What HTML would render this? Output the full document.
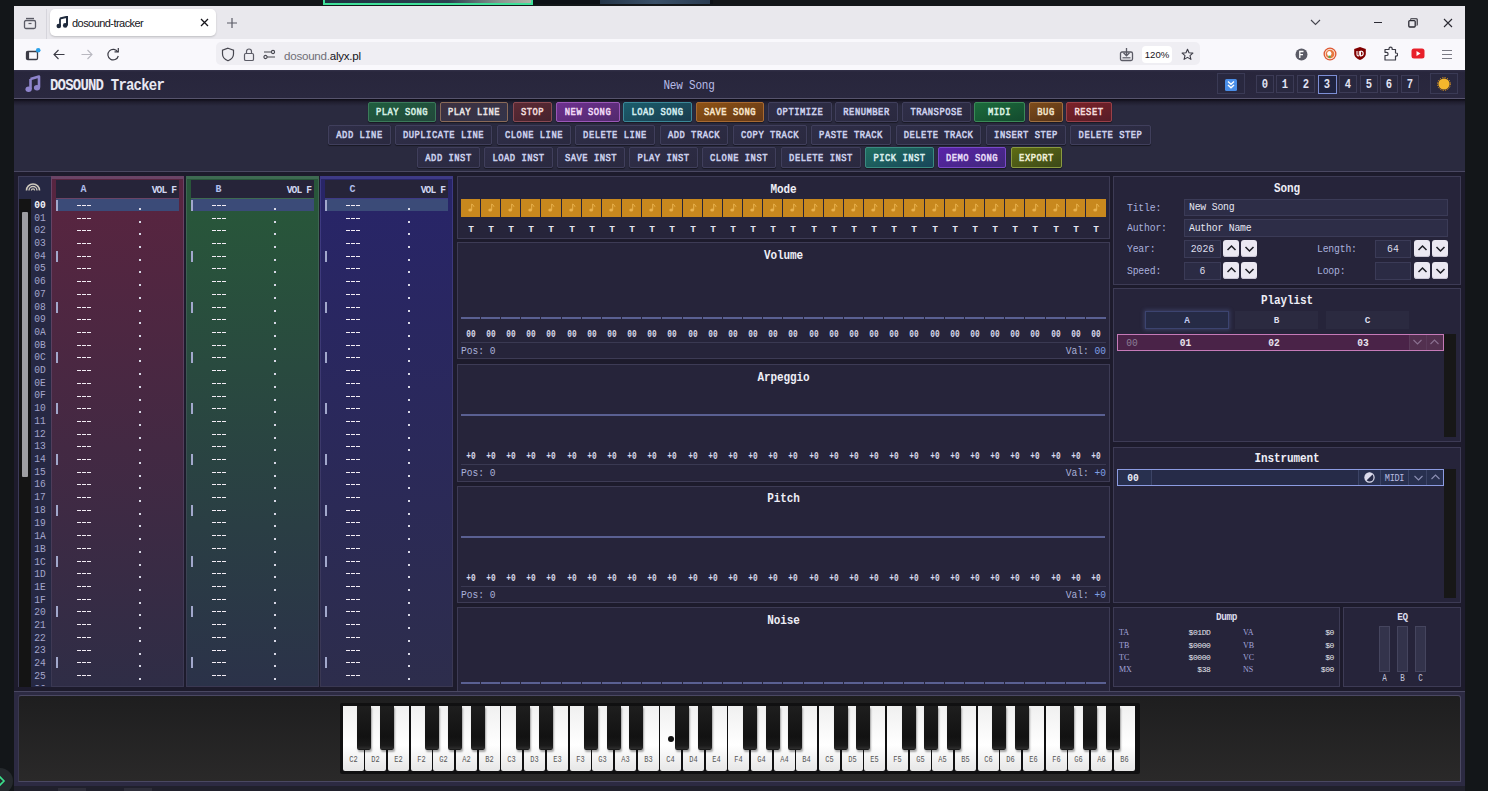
<!DOCTYPE html>
<html><head><meta charset="utf-8"><title>dosound-tracker</title>
<style>*{box-sizing:border-box;margin:0;padding:0}
html,body{width:1488px;height:791px;overflow:hidden;background:#131619;font-family:"Liberation Mono",monospace;position:relative}
.ab{position:absolute}
.cc{display:flex;align-items:center;justify-content:center;white-space:pre}
.lc{display:flex;align-items:center;white-space:pre}
.rc{display:flex;align-items:center;justify-content:flex-end;white-space:pre}
.sans{font-family:"Liberation Sans",sans-serif}
</style></head><body>
<div class="ab" style="left:323px;top:0px;width:210px;height:5px;background:linear-gradient(90deg,#1d3140,#2b4150 60%,#8a9690 85%,#b0b4a8);border:2px solid #3fe09a;border-top:none"></div><div class="ab" style="left:533px;top:0px;width:180px;height:4px;background:#0d1116"></div><div class="ab" style="left:600px;top:0px;width:110px;height:4px;background:linear-gradient(90deg,#243548,#3a5068,#2a3c52)"></div><div class="ab" style="left:14px;top:6px;width:1451px;height:33px;background:#e9e8ed"></div><div class="ab" style="left:14px;top:39px;width:1451px;height:31px;background:#f9f8fc"></div><svg class="ab" style="left:22px;top:15px;" width="16" height="16" viewBox="0 0 16 16"><rect x="2.5" y="5.5" width="11" height="8" rx="1.5" fill="none" stroke="#5b5b66" stroke-width="1.3"/><path d="M4 3.5h8" stroke="#5b5b66" stroke-width="1.3"/><path d="M6.5 8.5h3" stroke="#5b5b66" stroke-width="1.2"/></svg><div class="ab" style="left:46px;top:9px;width:1px;height:30px;background:#d6d5dc"></div><div class="ab" style="left:50px;top:9px;width:166px;height:27px;background:#fff;border-radius:5px;box-shadow:0 1px 2px rgba(0,0,0,.18)"></div><svg class="ab" style="left:56px;top:16px;" width="12" height="13" viewBox="0 0 12 13"><path d="M4 2.5 L11 0.8 V9.5" fill="none" stroke="#1f2a3c" stroke-width="2"/><circle cx="2.8" cy="10" r="2.3" fill="#1f2a3c"/><circle cx="9.2" cy="9.4" r="2.3" fill="#1f2a3c"/><path d="M4 2.5 V10" stroke="#1f2a3c" stroke-width="1.8"/></svg><div class="ab lc" style="left:72px;top:12.50px;height:20px;font-family:'Liberation Sans',sans-serif;font-size:11px;letter-spacing:-0.55px;color:#15141a">dosound-tracker</div><svg class="ab" style="left:200px;top:18px;" width="9" height="9" viewBox="0 0 9 9"><path d="M1 1 L8 8 M8 1 L1 8" stroke="#15141a" stroke-width="1.3"/></svg><svg class="ab" style="left:226px;top:17px;" width="12" height="12" viewBox="0 0 12 12"><path d="M6 1 V11 M1 6 H11" stroke="#5b5b66" stroke-width="1.2"/></svg><svg class="ab" style="left:1310px;top:19px;" width="11" height="7" viewBox="0 0 11 7"><path d="M1 1 L5.5 5.5 L10 1" fill="none" stroke="#45454e" stroke-width="1.1"/></svg><div class="ab" style="left:1374px;top:22px;width:8px;height:1.3px;background:#2b2a33"></div><svg class="ab" style="left:1408px;top:18px;" width="10" height="10" viewBox="0 0 10 10"><rect x="0.8" y="2.6" width="6.4" height="6.4" rx="1" fill="none" stroke="#2b2a33" stroke-width="1.3"/><path d="M2.6 1.8 V1.4 Q2.6 0.8 3.4 0.8 H8.4 Q9.2 0.8 9.2 1.6 V6.6 Q9.2 7.4 8.6 7.4" fill="none" stroke="#2b2a33" stroke-width="1.1"/></svg><svg class="ab" style="left:1443px;top:18px;" width="10" height="10" viewBox="0 0 10 10"><path d="M1 1 L9 9 M9 1 L1 9" stroke="#2b2a33" stroke-width="1.1"/></svg><svg class="ab" style="left:24px;top:46px;" width="18" height="16" viewBox="0 0 18 16"><rect x="2.5" y="5.5" width="11" height="8" rx="1.3" fill="none" stroke="#3b3b45" stroke-width="1.3"/><rect x="2.5" y="5.5" width="2.6" height="8" fill="#3b3b45"/><circle cx="14.2" cy="4.2" r="2.3" fill="#2aa1e8"/></svg><svg class="ab" style="left:52px;top:48px;" width="14" height="14" viewBox="0 0 14 14"><path d="M12.5 6.5 H2 M6.5 2 L2 6.5 L6.5 11" fill="none" stroke="#3b3b45" stroke-width="1.1"/></svg><svg class="ab" style="left:80px;top:48px;" width="14" height="14" viewBox="0 0 14 14"><path d="M1.5 6.5 H12 M7.5 2 L12 6.5 L7.5 11" fill="none" stroke="#b9b8c0" stroke-width="1.1"/></svg><svg class="ab" style="left:106px;top:47px;" width="14" height="15" viewBox="0 0 14 15"><path d="M11.8 5 A5.3 5.3 0 1 0 12.3 9" fill="none" stroke="#3b3b45" stroke-width="1.2"/><path d="M8.5 4.8 H12.3 V1" fill="none" stroke="#3b3b45" stroke-width="1.2"/></svg><div class="ab" style="left:216px;top:42px;width:984px;height:23px;background:#efeef3;border-radius:5px"></div><svg class="ab" style="left:221px;top:47px;" width="14" height="15" viewBox="0 0 14 15"><path d="M7 1.2 L12.5 3.2 V7 C12.5 10.5 9.5 12.8 7 13.8 C4.5 12.8 1.5 10.5 1.5 7 V3.2 Z" fill="none" stroke="#46464f" stroke-width="1.2"/></svg><svg class="ab" style="left:243px;top:47px;" width="12" height="15" viewBox="0 0 12 15"><rect x="1.5" y="6.5" width="9" height="7" rx="1.3" fill="none" stroke="#5b5b66" stroke-width="1.2"/><path d="M3.5 6.5 V4.5 A2.5 2.5 0 0 1 8.5 4.5 V6.5" fill="none" stroke="#5b5b66" stroke-width="1.2"/></svg><svg class="ab" style="left:263px;top:49px;" width="13" height="11" viewBox="0 0 13 11"><path d="M1 3 H8 M4 8 H12" stroke="#46464f" stroke-width="1.2"/><circle cx="10" cy="3" r="1.6" fill="none" stroke="#46464f" stroke-width="1.1"/><circle cx="2.5" cy="8" r="1.6" fill="none" stroke="#46464f" stroke-width="1.1"/></svg><div class="ab lc" style="left:284px;top:45.00px;height:20px;font-family:'Liberation Sans',sans-serif;font-size:11.6px;letter-spacing:-0.25px"><span style="color:#6f6f78">dosound.</span><span style="color:#15141a">alyx.pl</span></div><svg class="ab" style="left:1119px;top:47px;" width="15" height="15" viewBox="0 0 15 15"><rect x="1.5" y="5" width="12" height="8.5" rx="1.5" fill="none" stroke="#5b5b66" stroke-width="1.3"/><path d="M7.5 1 V8.5 M4.5 5.8 L7.5 8.8 L10.5 5.8" fill="none" stroke="#5b5b66" stroke-width="1.3"/><path d="M3.5 10.8 H11.5" stroke="#5b5b66" stroke-width="1.2"/></svg><div class="ab" style="left:1142px;top:46px;width:30px;height:17px;background:#fff;border-radius:4px"></div><div class="ab cc" style="left:1137.00px;top:47.50px;width:40px;height:14px;font-family:'Liberation Sans',sans-serif;font-size:9.6px;color:#15141a">120%</div><svg class="ab" style="left:1181px;top:48px;" width="13" height="13" viewBox="0 0 13 13"><path d="M6.5 1.2 L8 4.8 L11.9 5.1 L9 7.6 L9.9 11.4 L6.5 9.4 L3.1 11.4 L4 7.6 L1.1 5.1 L5 4.8 Z" fill="none" stroke="#3b3b45" stroke-width="1.1" stroke-linejoin="round"/></svg><svg class="ab" style="left:1295px;top:48px;" width="13" height="13" viewBox="0 0 13 13"><circle cx="6.5" cy="6.5" r="6" fill="#5b5b66"/><path d="M4.8 10 V3.5 H8.5 M4.8 6.6 H8" stroke="#fff" stroke-width="1.3" fill="none"/></svg><svg class="ab" style="left:1323px;top:47px;" width="14" height="14" viewBox="0 0 14 14"><circle cx="7" cy="7" r="6.5" fill="#de5833"/><circle cx="7" cy="7" r="5.2" fill="#fbe7dc"/><circle cx="7" cy="7" r="4.3" fill="#e8793f"/><ellipse cx="6.3" cy="6.6" rx="2.2" ry="2.6" fill="#fff"/><rect x="5.6" y="8.6" width="2" height="2.4" fill="#4caf50"/></svg><svg class="ab" style="left:1353px;top:46px;" width="14" height="15" viewBox="0 0 14 15"><path d="M7 1 L12.8 3 V7.5 C12.8 10.8 10 13 7 14 C4 13 1.2 10.8 1.2 7.5 V3 Z" fill="#800000"/><path d="M4 5 V8.5 Q4 10 5.3 10 Q6.3 10 6.3 8.5 V5" fill="none" stroke="#fff" stroke-width="1.1"/><path d="M7.5 5 V10 Q10.2 10 10.2 7.5 Q10.2 5 7.5 5" fill="none" stroke="#fff" stroke-width="1.1"/></svg><svg class="ab" style="left:1383px;top:46px;" width="15" height="16" viewBox="0 0 15 16"><path d="M2 14 V9.5 H3.5 A1.6 1.6 0 1 0 3.5 6.3 H2 V3.5 H6 V2.8 A1.6 1.6 0 1 1 9.2 2.8 V3.5 H12.5 V7 H13 A1.6 1.6 0 1 1 13 10.2 H12.5 V14 Z" fill="none" stroke="#3b3b45" stroke-width="1.2" stroke-linejoin="round"/></svg><svg class="ab" style="left:1411px;top:48px;" width="14" height="11" viewBox="0 0 14 11"><rect x="0.5" y="0.5" width="13" height="10" rx="2.5" fill="#e8202a"/><path d="M5.5 3 L9.5 5.5 L5.5 8 Z" fill="#fff"/></svg><svg class="ab" style="left:1441px;top:48px;" width="12" height="12" viewBox="0 0 12 12"><path d="M1 2.5 H11 M1 6.5 H11 M1 10.5 H11" stroke="#7a7a84" stroke-width="1.2"/></svg><div class="ab" style="left:14px;top:70px;width:1451px;height:721px;background:#2a2a3f"></div><div class="ab" style="left:14px;top:70px;width:1451px;height:29px;background:linear-gradient(180deg,#34324a 0px,#28263c 2px,#2a283f);border-bottom:1px solid #57546d"></div><div class="ab" style="left:14px;top:99px;width:1451px;height:7px;background:linear-gradient(180deg,#0c0b15,#1f1d2e 40%,#2a2a3f)"></div><svg class="ab" style="left:25px;top:75px;" width="16" height="18" viewBox="0 0 16 18"><path d="M5.5 4 L14 1.5 V12.5" fill="none" stroke="#8e84cc" stroke-width="2.6" stroke-linejoin="round"/><path d="M5.5 4 V14" stroke="#8e84cc" stroke-width="2.6"/><ellipse cx="3.6" cy="14.2" rx="3.1" ry="2.7" fill="#8e84cc"/><ellipse cx="12" cy="12.8" rx="3.1" ry="2.7" fill="#8e84cc"/></svg><div class="ab lc" style="left:50px;top:75.00px;height:20px;font-size:14px;letter-spacing:-0.8px;font-weight:bold;color:#e8e8f2"><span style="display:inline-block;transform:scaleY(1.2)">DOSOUND Tracker</span></div><div class="ab cc" style="left:629.00px;top:74.50px;width:120px;height:20px;font-size:11px;letter-spacing:-0.2px;color:#b8bce8"><span style="display:inline-block;transform:scaleY(1.2)">New Song</span></div><div class="ab" style="left:1217px;top:73px;width:28px;height:21px;border:1px solid #3a3a55;background:#29283f"></div><svg class="ab" style="left:1225px;top:79px;" width="12" height="12" viewBox="0 0 12 12"><rect x="0" y="0" width="12" height="12" rx="1.5" fill="#4a8ee8"/><path d="M3 2.5 L6 5.2 L9 2.5 M3 6 L6 8.8 L9 6" fill="none" stroke="#fff" stroke-width="1.4"/></svg><div class="ab" style="left:1256px;top:75px;width:18px;height:18px;border:1px solid #3c3b56;background:#29283f"></div><div class="ab cc" style="left:1256.00px;top:75.60px;width:18px;height:16px;font-size:10.5px;font-weight:bold;color:#e2e4f4"><span style="display:inline-block;transform:scaleY(1.2)">0</span></div><div class="ab" style="left:1276px;top:75px;width:18px;height:18px;border:1px solid #3c3b56;background:#29283f"></div><div class="ab cc" style="left:1276.00px;top:75.60px;width:18px;height:16px;font-size:10.5px;font-weight:bold;color:#e2e4f4"><span style="display:inline-block;transform:scaleY(1.2)">1</span></div><div class="ab" style="left:1297px;top:75px;width:18px;height:18px;border:1px solid #3c3b56;background:#29283f"></div><div class="ab cc" style="left:1297.00px;top:75.60px;width:18px;height:16px;font-size:10.5px;font-weight:bold;color:#e2e4f4"><span style="display:inline-block;transform:scaleY(1.2)">2</span></div><div class="ab" style="left:1318px;top:75px;width:19px;height:19px;border:1px solid #7d8fd6;background:#1f2340"></div><div class="ab cc" style="left:1318.00px;top:75.60px;width:18px;height:16px;font-size:10.5px;font-weight:bold;color:#e2e4f4"><span style="display:inline-block;transform:scaleY(1.2)">3</span></div><div class="ab" style="left:1339px;top:75px;width:18px;height:18px;border:1px solid #3c3b56;background:#29283f"></div><div class="ab cc" style="left:1339.00px;top:75.60px;width:18px;height:16px;font-size:10.5px;font-weight:bold;color:#e2e4f4"><span style="display:inline-block;transform:scaleY(1.2)">4</span></div><div class="ab" style="left:1360px;top:75px;width:18px;height:18px;border:1px solid #3c3b56;background:#29283f"></div><div class="ab cc" style="left:1360.00px;top:75.60px;width:18px;height:16px;font-size:10.5px;font-weight:bold;color:#e2e4f4"><span style="display:inline-block;transform:scaleY(1.2)">5</span></div><div class="ab" style="left:1380px;top:75px;width:18px;height:18px;border:1px solid #3c3b56;background:#29283f"></div><div class="ab cc" style="left:1380.00px;top:75.60px;width:18px;height:16px;font-size:10.5px;font-weight:bold;color:#e2e4f4"><span style="display:inline-block;transform:scaleY(1.2)">6</span></div><div class="ab" style="left:1401px;top:75px;width:18px;height:18px;border:1px solid #3c3b56;background:#29283f"></div><div class="ab cc" style="left:1401.00px;top:75.60px;width:18px;height:16px;font-size:10.5px;font-weight:bold;color:#e2e4f4"><span style="display:inline-block;transform:scaleY(1.2)">7</span></div><div class="ab" style="left:1430px;top:73px;width:28px;height:21px;border:1px solid #3a3a55;background:#29283f"></div><svg class="ab" style="left:1437px;top:77px;" width="14" height="14" viewBox="0 0 14 14"><circle cx="7" cy="7" r="5.6" fill="#f3b62c"/><circle cx="7" cy="7" r="6.4" fill="none" stroke="#e89a20" stroke-width="1" stroke-dasharray="1.2 1.3"/></svg><div class="ab" style="left:368px;top:102px;width:68px;height:20px;background:linear-gradient(160deg,#1f5e3e,#22473a);border:1px solid #3b7a5a;border-radius:2px;box-shadow:0 1px 1px rgba(0,0,0,.45)"></div><div class="ab cc" style="left:363.00px;top:102.00px;width:78px;height:20px;font-size:8.8px;letter-spacing:0.52px;font-weight:normal;-webkit-text-stroke:0.45px #d8f0e4;color:#d8f0e4"><span style="display:inline-block;transform:scaleY(1.3)">PLAY SONG</span></div><div class="ab" style="left:440px;top:102px;width:68px;height:20px;background:linear-gradient(160deg,#3d3040,#33344a);border:1px solid #8a6a58;border-radius:2px;box-shadow:0 1px 1px rgba(0,0,0,.45)"></div><div class="ab cc" style="left:435.00px;top:102.00px;width:78px;height:20px;font-size:8.8px;letter-spacing:0.52px;font-weight:normal;-webkit-text-stroke:0.45px #eae4e4;color:#eae4e4"><span style="display:inline-block;transform:scaleY(1.3)">PLAY LINE</span></div><div class="ab" style="left:513px;top:102px;width:39px;height:20px;background:linear-gradient(160deg,#5c2a34,#45222e);border:1px solid #8a4a52;border-radius:2px;box-shadow:0 1px 1px rgba(0,0,0,.45)"></div><div class="ab cc" style="left:508.00px;top:102.00px;width:49px;height:20px;font-size:8.8px;letter-spacing:0.52px;font-weight:normal;-webkit-text-stroke:0.45px #f2dede;color:#f2dede"><span style="display:inline-block;transform:scaleY(1.3)">STOP</span></div><div class="ab" style="left:556px;top:102px;width:64px;height:20px;background:linear-gradient(160deg,#6d318f,#52296c);border:1px solid #9a58b8;border-radius:2px;box-shadow:0 1px 1px rgba(0,0,0,.45)"></div><div class="ab cc" style="left:551.00px;top:102.00px;width:74px;height:20px;font-size:8.8px;letter-spacing:0.52px;font-weight:normal;-webkit-text-stroke:0.45px #f2dcf8;color:#f2dcf8"><span style="display:inline-block;transform:scaleY(1.3)">NEW SONG</span></div><div class="ab" style="left:623px;top:102px;width:69px;height:20px;background:linear-gradient(160deg,#1b5d6c,#1a3c4e);border:1px solid #3b8898;border-radius:2px;box-shadow:0 1px 1px rgba(0,0,0,.45)"></div><div class="ab cc" style="left:618.00px;top:102.00px;width:79px;height:20px;font-size:8.8px;letter-spacing:0.52px;font-weight:normal;-webkit-text-stroke:0.45px #d6eef2;color:#d6eef2"><span style="display:inline-block;transform:scaleY(1.3)">LOAD SONG</span></div><div class="ab" style="left:696px;top:102px;width:68px;height:20px;background:linear-gradient(160deg,#8e5214,#633818);border:1px solid #a86a32;border-radius:2px;box-shadow:0 1px 1px rgba(0,0,0,.45)"></div><div class="ab cc" style="left:691.00px;top:102.00px;width:78px;height:20px;font-size:8.8px;letter-spacing:0.52px;font-weight:normal;-webkit-text-stroke:0.45px #f8e6cc;color:#f8e6cc"><span style="display:inline-block;transform:scaleY(1.3)">SAVE SONG</span></div><div class="ab" style="left:768px;top:102px;width:64px;height:20px;background:linear-gradient(160deg,#2f2e48,#2a293f);border:1px solid #403f5c;border-radius:2px;box-shadow:0 1px 1px rgba(0,0,0,.45)"></div><div class="ab cc" style="left:763.00px;top:102.00px;width:74px;height:20px;font-size:8.8px;letter-spacing:0.52px;font-weight:normal;-webkit-text-stroke:0.45px #cdd2ee;color:#cdd2ee"><span style="display:inline-block;transform:scaleY(1.3)">OPTIMIZE</span></div><div class="ab" style="left:835px;top:102px;width:63px;height:20px;background:linear-gradient(160deg,#2f2e48,#2a293f);border:1px solid #403f5c;border-radius:2px;box-shadow:0 1px 1px rgba(0,0,0,.45)"></div><div class="ab cc" style="left:830.00px;top:102.00px;width:73px;height:20px;font-size:8.8px;letter-spacing:0.52px;font-weight:normal;-webkit-text-stroke:0.45px #cdd2ee;color:#cdd2ee"><span style="display:inline-block;transform:scaleY(1.3)">RENUMBER</span></div><div class="ab" style="left:902px;top:102px;width:69px;height:20px;background:linear-gradient(160deg,#2f2e48,#2a293f);border:1px solid #403f5c;border-radius:2px;box-shadow:0 1px 1px rgba(0,0,0,.45)"></div><div class="ab cc" style="left:897.00px;top:102.00px;width:79px;height:20px;font-size:8.8px;letter-spacing:0.52px;font-weight:normal;-webkit-text-stroke:0.45px #cdd2ee;color:#cdd2ee"><span style="display:inline-block;transform:scaleY(1.3)">TRANSPOSE</span></div><div class="ab" style="left:974px;top:102px;width:51px;height:20px;background:linear-gradient(160deg,#1c6c3c,#134a2e);border:1px solid #3b8a58;border-radius:2px;box-shadow:0 1px 1px rgba(0,0,0,.45)"></div><div class="ab cc" style="left:969.00px;top:102.00px;width:61px;height:20px;font-size:8.8px;letter-spacing:0.52px;font-weight:normal;-webkit-text-stroke:0.45px #dcf4e4;color:#dcf4e4"><span style="display:inline-block;transform:scaleY(1.3)">MIDI</span></div><div class="ab" style="left:1029px;top:102px;width:34px;height:20px;background:linear-gradient(160deg,#7e4c1a,#553218);border:1px solid #a07040;border-radius:2px;box-shadow:0 1px 1px rgba(0,0,0,.45)"></div><div class="ab cc" style="left:1024.00px;top:102.00px;width:44px;height:20px;font-size:8.8px;letter-spacing:0.52px;font-weight:normal;-webkit-text-stroke:0.45px #f4e4cc;color:#f4e4cc"><span style="display:inline-block;transform:scaleY(1.3)">BUG</span></div><div class="ab" style="left:1066px;top:102px;width:46px;height:20px;background:linear-gradient(160deg,#7c2228,#561c28);border:1px solid #9a4048;border-radius:2px;box-shadow:0 1px 1px rgba(0,0,0,.45)"></div><div class="ab cc" style="left:1061.00px;top:102.00px;width:56px;height:20px;font-size:8.8px;letter-spacing:0.52px;font-weight:normal;-webkit-text-stroke:0.45px #f6dede;color:#f6dede"><span style="display:inline-block;transform:scaleY(1.3)">RESET</span></div><div class="ab" style="left:328px;top:125px;width:63px;height:20px;background:linear-gradient(160deg,#2f2e48,#2a293f);border:1px solid #403f5c;border-radius:2px;box-shadow:0 1px 1px rgba(0,0,0,.45)"></div><div class="ab cc" style="left:323.00px;top:125.00px;width:73px;height:20px;font-size:8.8px;letter-spacing:0.52px;font-weight:normal;-webkit-text-stroke:0.45px #cdd2ee;color:#cdd2ee"><span style="display:inline-block;transform:scaleY(1.3)">ADD LINE</span></div><div class="ab" style="left:395px;top:125px;width:97px;height:20px;background:linear-gradient(160deg,#2f2e48,#2a293f);border:1px solid #403f5c;border-radius:2px;box-shadow:0 1px 1px rgba(0,0,0,.45)"></div><div class="ab cc" style="left:390.00px;top:125.00px;width:107px;height:20px;font-size:8.8px;letter-spacing:0.52px;font-weight:normal;-webkit-text-stroke:0.45px #cdd2ee;color:#cdd2ee"><span style="display:inline-block;transform:scaleY(1.3)">DUPLICATE LINE</span></div><div class="ab" style="left:497px;top:125px;width:74px;height:20px;background:linear-gradient(160deg,#2f2e48,#2a293f);border:1px solid #403f5c;border-radius:2px;box-shadow:0 1px 1px rgba(0,0,0,.45)"></div><div class="ab cc" style="left:492.00px;top:125.00px;width:84px;height:20px;font-size:8.8px;letter-spacing:0.52px;font-weight:normal;-webkit-text-stroke:0.45px #cdd2ee;color:#cdd2ee"><span style="display:inline-block;transform:scaleY(1.3)">CLONE LINE</span></div><div class="ab" style="left:575px;top:125px;width:80px;height:20px;background:linear-gradient(160deg,#2f2e48,#2a293f);border:1px solid #403f5c;border-radius:2px;box-shadow:0 1px 1px rgba(0,0,0,.45)"></div><div class="ab cc" style="left:570.00px;top:125.00px;width:90px;height:20px;font-size:8.8px;letter-spacing:0.52px;font-weight:normal;-webkit-text-stroke:0.45px #cdd2ee;color:#cdd2ee"><span style="display:inline-block;transform:scaleY(1.3)">DELETE LINE</span></div><div class="ab" style="left:660px;top:125px;width:68px;height:20px;background:linear-gradient(160deg,#2f2e48,#2a293f);border:1px solid #403f5c;border-radius:2px;box-shadow:0 1px 1px rgba(0,0,0,.45)"></div><div class="ab cc" style="left:655.00px;top:125.00px;width:78px;height:20px;font-size:8.8px;letter-spacing:0.52px;font-weight:normal;-webkit-text-stroke:0.45px #cdd2ee;color:#cdd2ee"><span style="display:inline-block;transform:scaleY(1.3)">ADD TRACK</span></div><div class="ab" style="left:733px;top:125px;width:74px;height:20px;background:linear-gradient(160deg,#2f2e48,#2a293f);border:1px solid #403f5c;border-radius:2px;box-shadow:0 1px 1px rgba(0,0,0,.45)"></div><div class="ab cc" style="left:728.00px;top:125.00px;width:84px;height:20px;font-size:8.8px;letter-spacing:0.52px;font-weight:normal;-webkit-text-stroke:0.45px #cdd2ee;color:#cdd2ee"><span style="display:inline-block;transform:scaleY(1.3)">COPY TRACK</span></div><div class="ab" style="left:811px;top:125px;width:80px;height:20px;background:linear-gradient(160deg,#2f2e48,#2a293f);border:1px solid #403f5c;border-radius:2px;box-shadow:0 1px 1px rgba(0,0,0,.45)"></div><div class="ab cc" style="left:806.00px;top:125.00px;width:90px;height:20px;font-size:8.8px;letter-spacing:0.52px;font-weight:normal;-webkit-text-stroke:0.45px #cdd2ee;color:#cdd2ee"><span style="display:inline-block;transform:scaleY(1.3)">PASTE TRACK</span></div><div class="ab" style="left:896px;top:125px;width:85px;height:20px;background:linear-gradient(160deg,#2f2e48,#2a293f);border:1px solid #403f5c;border-radius:2px;box-shadow:0 1px 1px rgba(0,0,0,.45)"></div><div class="ab cc" style="left:891.00px;top:125.00px;width:95px;height:20px;font-size:8.8px;letter-spacing:0.52px;font-weight:normal;-webkit-text-stroke:0.45px #cdd2ee;color:#cdd2ee"><span style="display:inline-block;transform:scaleY(1.3)">DELETE TRACK</span></div><div class="ab" style="left:986px;top:125px;width:80px;height:20px;background:linear-gradient(160deg,#2f2e48,#2a293f);border:1px solid #403f5c;border-radius:2px;box-shadow:0 1px 1px rgba(0,0,0,.45)"></div><div class="ab cc" style="left:981.00px;top:125.00px;width:90px;height:20px;font-size:8.8px;letter-spacing:0.52px;font-weight:normal;-webkit-text-stroke:0.45px #cdd2ee;color:#cdd2ee"><span style="display:inline-block;transform:scaleY(1.3)">INSERT STEP</span></div><div class="ab" style="left:1070px;top:125px;width:81px;height:20px;background:linear-gradient(160deg,#2f2e48,#2a293f);border:1px solid #403f5c;border-radius:2px;box-shadow:0 1px 1px rgba(0,0,0,.45)"></div><div class="ab cc" style="left:1065.00px;top:125.00px;width:91px;height:20px;font-size:8.8px;letter-spacing:0.52px;font-weight:normal;-webkit-text-stroke:0.45px #cdd2ee;color:#cdd2ee"><span style="display:inline-block;transform:scaleY(1.3)">DELETE STEP</span></div><div class="ab" style="left:417px;top:147px;width:63px;height:21px;background:linear-gradient(160deg,#2f2e48,#2a293f);border:1px solid #403f5c;border-radius:2px;box-shadow:0 1px 1px rgba(0,0,0,.45)"></div><div class="ab cc" style="left:412.00px;top:147.00px;width:73px;height:21px;font-size:8.8px;letter-spacing:0.52px;font-weight:normal;-webkit-text-stroke:0.45px #cdd2ee;color:#cdd2ee"><span style="display:inline-block;transform:scaleY(1.3)">ADD INST</span></div><div class="ab" style="left:484px;top:147px;width:69px;height:21px;background:linear-gradient(160deg,#2f2e48,#2a293f);border:1px solid #403f5c;border-radius:2px;box-shadow:0 1px 1px rgba(0,0,0,.45)"></div><div class="ab cc" style="left:479.00px;top:147.00px;width:79px;height:21px;font-size:8.8px;letter-spacing:0.52px;font-weight:normal;-webkit-text-stroke:0.45px #cdd2ee;color:#cdd2ee"><span style="display:inline-block;transform:scaleY(1.3)">LOAD INST</span></div><div class="ab" style="left:557px;top:147px;width:68px;height:21px;background:linear-gradient(160deg,#2f2e48,#2a293f);border:1px solid #403f5c;border-radius:2px;box-shadow:0 1px 1px rgba(0,0,0,.45)"></div><div class="ab cc" style="left:552.00px;top:147.00px;width:78px;height:21px;font-size:8.8px;letter-spacing:0.52px;font-weight:normal;-webkit-text-stroke:0.45px #cdd2ee;color:#cdd2ee"><span style="display:inline-block;transform:scaleY(1.3)">SAVE INST</span></div><div class="ab" style="left:629px;top:147px;width:69px;height:21px;background:linear-gradient(160deg,#2f2e48,#2a293f);border:1px solid #403f5c;border-radius:2px;box-shadow:0 1px 1px rgba(0,0,0,.45)"></div><div class="ab cc" style="left:624.00px;top:147.00px;width:79px;height:21px;font-size:8.8px;letter-spacing:0.52px;font-weight:normal;-webkit-text-stroke:0.45px #cdd2ee;color:#cdd2ee"><span style="display:inline-block;transform:scaleY(1.3)">PLAY INST</span></div><div class="ab" style="left:702px;top:147px;width:74px;height:21px;background:linear-gradient(160deg,#2f2e48,#2a293f);border:1px solid #403f5c;border-radius:2px;box-shadow:0 1px 1px rgba(0,0,0,.45)"></div><div class="ab cc" style="left:697.00px;top:147.00px;width:84px;height:21px;font-size:8.8px;letter-spacing:0.52px;font-weight:normal;-webkit-text-stroke:0.45px #cdd2ee;color:#cdd2ee"><span style="display:inline-block;transform:scaleY(1.3)">CLONE INST</span></div><div class="ab" style="left:781px;top:147px;width:80px;height:21px;background:linear-gradient(160deg,#2f2e48,#2a293f);border:1px solid #403f5c;border-radius:2px;box-shadow:0 1px 1px rgba(0,0,0,.45)"></div><div class="ab cc" style="left:776.00px;top:147.00px;width:90px;height:21px;font-size:8.8px;letter-spacing:0.52px;font-weight:normal;-webkit-text-stroke:0.45px #cdd2ee;color:#cdd2ee"><span style="display:inline-block;transform:scaleY(1.3)">DELETE INST</span></div><div class="ab" style="left:865px;top:147px;width:69px;height:21px;background:linear-gradient(160deg,#207060,#18455a);border:1px solid #3b8a80;border-radius:2px;box-shadow:0 1px 1px rgba(0,0,0,.45)"></div><div class="ab cc" style="left:860.00px;top:147.00px;width:79px;height:21px;font-size:8.8px;letter-spacing:0.52px;font-weight:normal;-webkit-text-stroke:0.45px #dcf0ee;color:#dcf0ee"><span style="display:inline-block;transform:scaleY(1.3)">PICK INST</span></div><div class="ab" style="left:938px;top:147px;width:68px;height:21px;background:linear-gradient(160deg,#5a22aa,#3f2878);border:1px solid #7a4ac8;border-radius:2px;box-shadow:0 1px 1px rgba(0,0,0,.45)"></div><div class="ab cc" style="left:933.00px;top:147.00px;width:78px;height:21px;font-size:8.8px;letter-spacing:0.52px;font-weight:normal;-webkit-text-stroke:0.45px #e8dcfa;color:#e8dcfa"><span style="display:inline-block;transform:scaleY(1.3)">DEMO SONG</span></div><div class="ab" style="left:1011px;top:147px;width:51px;height:21px;background:linear-gradient(160deg,#5e6c14,#3c4818);border:1px solid #8a9a40;border-radius:2px;box-shadow:0 1px 1px rgba(0,0,0,.45)"></div><div class="ab cc" style="left:1006.00px;top:147.00px;width:61px;height:21px;font-size:8.8px;letter-spacing:0.52px;font-weight:normal;-webkit-text-stroke:0.45px #f0f0d8;color:#f0f0d8"><span style="display:inline-block;transform:scaleY(1.3)">EXPORT</span></div><div class="ab" style="left:14px;top:171px;width:1451px;height:1px;background:#4a4862"></div><div class="ab" style="left:14px;top:172px;width:1451px;height:4px;background:#15131f"></div><div class="ab" style="left:14px;top:172px;width:1451px;height:519px;background:#1d1b2c"></div><div class="ab" style="left:18px;top:176px;width:33px;height:511px;background:#262843;border-left:1px solid #3b3a57;border-top:1px solid #3b3a57"></div><svg class="ab" style="left:25px;top:182px;" width="16" height="10" viewBox="0 0 16 10"><path d="M1.5 8.5 A6.5 6.5 0 0 1 14.5 8.5" fill="none" stroke="#cdc8bc" stroke-width="1.6"/><path d="M4 8.5 A4 4 0 0 1 12 8.5" fill="none" stroke="#cdc8bc" stroke-width="1.4"/><path d="M6.4 8.5 A1.6 1.6 0 0 1 9.6 8.5" fill="none" stroke="#cdc8bc" stroke-width="1.3"/></svg><div class="ab" style="left:19px;top:199px;width:12px;height:488px;background:#141414"></div><div class="ab" style="left:22px;top:212px;width:6px;height:265px;background:#9e9ea2;border-radius:1px"></div><div class="ab" style="left:31px;top:199px;width:20px;height:487px;overflow:hidden"><div class="ab cc" style="left:-1.00px;top:0.40px;width:20px;height:12px;font-size:9.6px;font-weight:bold;color:#f4f4fa"><span style="display:inline-block;transform:scaleY(1.2)">00</span></div><div class="ab cc" style="left:-1.00px;top:13.10px;width:20px;height:12px;font-size:9.6px;color:#a4a6cc"><span style="display:inline-block;transform:scaleY(1.2)">01</span></div><div class="ab cc" style="left:-1.00px;top:25.80px;width:20px;height:12px;font-size:9.6px;color:#a4a6cc"><span style="display:inline-block;transform:scaleY(1.2)">02</span></div><div class="ab cc" style="left:-1.00px;top:38.50px;width:20px;height:12px;font-size:9.6px;color:#a4a6cc"><span style="display:inline-block;transform:scaleY(1.2)">03</span></div><div class="ab cc" style="left:-1.00px;top:51.20px;width:20px;height:12px;font-size:9.6px;color:#a4a6cc"><span style="display:inline-block;transform:scaleY(1.2)">04</span></div><div class="ab cc" style="left:-1.00px;top:63.90px;width:20px;height:12px;font-size:9.6px;color:#a4a6cc"><span style="display:inline-block;transform:scaleY(1.2)">05</span></div><div class="ab cc" style="left:-1.00px;top:76.60px;width:20px;height:12px;font-size:9.6px;color:#a4a6cc"><span style="display:inline-block;transform:scaleY(1.2)">06</span></div><div class="ab cc" style="left:-1.00px;top:89.30px;width:20px;height:12px;font-size:9.6px;color:#a4a6cc"><span style="display:inline-block;transform:scaleY(1.2)">07</span></div><div class="ab cc" style="left:-1.00px;top:102.00px;width:20px;height:12px;font-size:9.6px;color:#a4a6cc"><span style="display:inline-block;transform:scaleY(1.2)">08</span></div><div class="ab cc" style="left:-1.00px;top:114.70px;width:20px;height:12px;font-size:9.6px;color:#a4a6cc"><span style="display:inline-block;transform:scaleY(1.2)">09</span></div><div class="ab cc" style="left:-1.00px;top:127.40px;width:20px;height:12px;font-size:9.6px;color:#a4a6cc"><span style="display:inline-block;transform:scaleY(1.2)">0A</span></div><div class="ab cc" style="left:-1.00px;top:140.10px;width:20px;height:12px;font-size:9.6px;color:#a4a6cc"><span style="display:inline-block;transform:scaleY(1.2)">0B</span></div><div class="ab cc" style="left:-1.00px;top:152.80px;width:20px;height:12px;font-size:9.6px;color:#a4a6cc"><span style="display:inline-block;transform:scaleY(1.2)">0C</span></div><div class="ab cc" style="left:-1.00px;top:165.50px;width:20px;height:12px;font-size:9.6px;color:#a4a6cc"><span style="display:inline-block;transform:scaleY(1.2)">0D</span></div><div class="ab cc" style="left:-1.00px;top:178.20px;width:20px;height:12px;font-size:9.6px;color:#a4a6cc"><span style="display:inline-block;transform:scaleY(1.2)">0E</span></div><div class="ab cc" style="left:-1.00px;top:190.90px;width:20px;height:12px;font-size:9.6px;color:#a4a6cc"><span style="display:inline-block;transform:scaleY(1.2)">0F</span></div><div class="ab cc" style="left:-1.00px;top:203.60px;width:20px;height:12px;font-size:9.6px;color:#a4a6cc"><span style="display:inline-block;transform:scaleY(1.2)">10</span></div><div class="ab cc" style="left:-1.00px;top:216.30px;width:20px;height:12px;font-size:9.6px;color:#a4a6cc"><span style="display:inline-block;transform:scaleY(1.2)">11</span></div><div class="ab cc" style="left:-1.00px;top:229.00px;width:20px;height:12px;font-size:9.6px;color:#a4a6cc"><span style="display:inline-block;transform:scaleY(1.2)">12</span></div><div class="ab cc" style="left:-1.00px;top:241.70px;width:20px;height:12px;font-size:9.6px;color:#a4a6cc"><span style="display:inline-block;transform:scaleY(1.2)">13</span></div><div class="ab cc" style="left:-1.00px;top:254.40px;width:20px;height:12px;font-size:9.6px;color:#a4a6cc"><span style="display:inline-block;transform:scaleY(1.2)">14</span></div><div class="ab cc" style="left:-1.00px;top:267.10px;width:20px;height:12px;font-size:9.6px;color:#a4a6cc"><span style="display:inline-block;transform:scaleY(1.2)">15</span></div><div class="ab cc" style="left:-1.00px;top:279.80px;width:20px;height:12px;font-size:9.6px;color:#a4a6cc"><span style="display:inline-block;transform:scaleY(1.2)">16</span></div><div class="ab cc" style="left:-1.00px;top:292.50px;width:20px;height:12px;font-size:9.6px;color:#a4a6cc"><span style="display:inline-block;transform:scaleY(1.2)">17</span></div><div class="ab cc" style="left:-1.00px;top:305.20px;width:20px;height:12px;font-size:9.6px;color:#a4a6cc"><span style="display:inline-block;transform:scaleY(1.2)">18</span></div><div class="ab cc" style="left:-1.00px;top:317.90px;width:20px;height:12px;font-size:9.6px;color:#a4a6cc"><span style="display:inline-block;transform:scaleY(1.2)">19</span></div><div class="ab cc" style="left:-1.00px;top:330.60px;width:20px;height:12px;font-size:9.6px;color:#a4a6cc"><span style="display:inline-block;transform:scaleY(1.2)">1A</span></div><div class="ab cc" style="left:-1.00px;top:343.30px;width:20px;height:12px;font-size:9.6px;color:#a4a6cc"><span style="display:inline-block;transform:scaleY(1.2)">1B</span></div><div class="ab cc" style="left:-1.00px;top:356.00px;width:20px;height:12px;font-size:9.6px;color:#a4a6cc"><span style="display:inline-block;transform:scaleY(1.2)">1C</span></div><div class="ab cc" style="left:-1.00px;top:368.70px;width:20px;height:12px;font-size:9.6px;color:#a4a6cc"><span style="display:inline-block;transform:scaleY(1.2)">1D</span></div><div class="ab cc" style="left:-1.00px;top:381.40px;width:20px;height:12px;font-size:9.6px;color:#a4a6cc"><span style="display:inline-block;transform:scaleY(1.2)">1E</span></div><div class="ab cc" style="left:-1.00px;top:394.10px;width:20px;height:12px;font-size:9.6px;color:#a4a6cc"><span style="display:inline-block;transform:scaleY(1.2)">1F</span></div><div class="ab cc" style="left:-1.00px;top:406.80px;width:20px;height:12px;font-size:9.6px;color:#a4a6cc"><span style="display:inline-block;transform:scaleY(1.2)">20</span></div><div class="ab cc" style="left:-1.00px;top:419.50px;width:20px;height:12px;font-size:9.6px;color:#a4a6cc"><span style="display:inline-block;transform:scaleY(1.2)">21</span></div><div class="ab cc" style="left:-1.00px;top:432.20px;width:20px;height:12px;font-size:9.6px;color:#a4a6cc"><span style="display:inline-block;transform:scaleY(1.2)">22</span></div><div class="ab cc" style="left:-1.00px;top:444.90px;width:20px;height:12px;font-size:9.6px;color:#a4a6cc"><span style="display:inline-block;transform:scaleY(1.2)">23</span></div><div class="ab cc" style="left:-1.00px;top:457.60px;width:20px;height:12px;font-size:9.6px;color:#a4a6cc"><span style="display:inline-block;transform:scaleY(1.2)">24</span></div><div class="ab cc" style="left:-1.00px;top:470.30px;width:20px;height:12px;font-size:9.6px;color:#a4a6cc"><span style="display:inline-block;transform:scaleY(1.2)">25</span></div><div class="ab cc" style="left:-1.00px;top:483.00px;width:20px;height:12px;font-size:9.6px;color:#a4a6cc"><span style="display:inline-block;transform:scaleY(1.2)">26</span></div></div><div class="ab" style="left:51px;top:176px;width:133px;height:511px;background:linear-gradient(180deg,#6a4466,#3a3852)"></div><div class="ab" style="left:52px;top:179px;width:131px;height:507px;background:linear-gradient(180deg,#572540 0%,#572540 6%,#2f2d46 100%)"></div><div class="ab" style="left:56px;top:180px;width:123px;height:18px;background:#262439"></div><div class="ab" style="left:56px;top:198px;width:123px;height:1px;background:#6a4466"></div><div class="ab cc" style="left:76.60px;top:182.80px;width:14px;height:14px;font-size:10px;font-weight:bold;color:#b0bfec"><span style="display:inline-block;transform:scaleY(1.02)">A</span></div><div class="ab rc" style="left:116px;top:183.20px;width:60px;height:14px;font-size:9.6px;letter-spacing:-0.9px;font-weight:bold;color:#d2d8f2"><span style="display:inline-block;transform:scaleY(1.08)">VOL F</span></div><div class="ab" style="left:56px;top:199px;width:123px;height:12px;background:#3b4b78"></div><div class="ab" style="left:56px;top:200px;width:1.5px;height:11px;background:#a2a8cc"></div><div class="ab" style="left:76.5px;top:205px;width:4px;height:1px;background:#f2ecf4"></div><div class="ab" style="left:81.5px;top:205px;width:4px;height:1px;background:#f2ecf4"></div><div class="ab" style="left:86.5px;top:205px;width:4px;height:1px;background:#f2ecf4"></div><div class="ab" style="left:138.8px;top:207.8px;width:1.8px;height:1.8px;background:#d8d8e6"></div><div class="ab" style="left:76.5px;top:218px;width:4px;height:1px;background:#f2ecf4"></div><div class="ab" style="left:81.5px;top:218px;width:4px;height:1px;background:#f2ecf4"></div><div class="ab" style="left:86.5px;top:218px;width:4px;height:1px;background:#f2ecf4"></div><div class="ab" style="left:138.8px;top:220.8px;width:1.8px;height:1.8px;background:#d8d8e6"></div><div class="ab" style="left:76.5px;top:230px;width:4px;height:1px;background:#f2ecf4"></div><div class="ab" style="left:81.5px;top:230px;width:4px;height:1px;background:#f2ecf4"></div><div class="ab" style="left:86.5px;top:230px;width:4px;height:1px;background:#f2ecf4"></div><div class="ab" style="left:138.8px;top:232.8px;width:1.8px;height:1.8px;background:#d8d8e6"></div><div class="ab" style="left:76.5px;top:243px;width:4px;height:1px;background:#f2ecf4"></div><div class="ab" style="left:81.5px;top:243px;width:4px;height:1px;background:#f2ecf4"></div><div class="ab" style="left:86.5px;top:243px;width:4px;height:1px;background:#f2ecf4"></div><div class="ab" style="left:138.8px;top:245.8px;width:1.8px;height:1.8px;background:#d8d8e6"></div><div class="ab" style="left:56px;top:251px;width:1.5px;height:11px;background:#a2a8cc"></div><div class="ab" style="left:76.5px;top:256px;width:4px;height:1px;background:#f2ecf4"></div><div class="ab" style="left:81.5px;top:256px;width:4px;height:1px;background:#f2ecf4"></div><div class="ab" style="left:86.5px;top:256px;width:4px;height:1px;background:#f2ecf4"></div><div class="ab" style="left:138.8px;top:258.8px;width:1.8px;height:1.8px;background:#d8d8e6"></div><div class="ab" style="left:76.5px;top:268px;width:4px;height:1px;background:#f2ecf4"></div><div class="ab" style="left:81.5px;top:268px;width:4px;height:1px;background:#f2ecf4"></div><div class="ab" style="left:86.5px;top:268px;width:4px;height:1px;background:#f2ecf4"></div><div class="ab" style="left:138.8px;top:270.8px;width:1.8px;height:1.8px;background:#d8d8e6"></div><div class="ab" style="left:76.5px;top:281px;width:4px;height:1px;background:#f2ecf4"></div><div class="ab" style="left:81.5px;top:281px;width:4px;height:1px;background:#f2ecf4"></div><div class="ab" style="left:86.5px;top:281px;width:4px;height:1px;background:#f2ecf4"></div><div class="ab" style="left:138.8px;top:283.8px;width:1.8px;height:1.8px;background:#d8d8e6"></div><div class="ab" style="left:76.5px;top:294px;width:4px;height:1px;background:#f2ecf4"></div><div class="ab" style="left:81.5px;top:294px;width:4px;height:1px;background:#f2ecf4"></div><div class="ab" style="left:86.5px;top:294px;width:4px;height:1px;background:#f2ecf4"></div><div class="ab" style="left:138.8px;top:296.8px;width:1.8px;height:1.8px;background:#d8d8e6"></div><div class="ab" style="left:56px;top:302px;width:1.5px;height:11px;background:#a2a8cc"></div><div class="ab" style="left:76.5px;top:307px;width:4px;height:1px;background:#f2ecf4"></div><div class="ab" style="left:81.5px;top:307px;width:4px;height:1px;background:#f2ecf4"></div><div class="ab" style="left:86.5px;top:307px;width:4px;height:1px;background:#f2ecf4"></div><div class="ab" style="left:138.8px;top:309.8px;width:1.8px;height:1.8px;background:#d8d8e6"></div><div class="ab" style="left:76.5px;top:319px;width:4px;height:1px;background:#f2ecf4"></div><div class="ab" style="left:81.5px;top:319px;width:4px;height:1px;background:#f2ecf4"></div><div class="ab" style="left:86.5px;top:319px;width:4px;height:1px;background:#f2ecf4"></div><div class="ab" style="left:138.8px;top:321.8px;width:1.8px;height:1.8px;background:#d8d8e6"></div><div class="ab" style="left:76.5px;top:332px;width:4px;height:1px;background:#f2ecf4"></div><div class="ab" style="left:81.5px;top:332px;width:4px;height:1px;background:#f2ecf4"></div><div class="ab" style="left:86.5px;top:332px;width:4px;height:1px;background:#f2ecf4"></div><div class="ab" style="left:138.8px;top:334.8px;width:1.8px;height:1.8px;background:#d8d8e6"></div><div class="ab" style="left:76.5px;top:345px;width:4px;height:1px;background:#f2ecf4"></div><div class="ab" style="left:81.5px;top:345px;width:4px;height:1px;background:#f2ecf4"></div><div class="ab" style="left:86.5px;top:345px;width:4px;height:1px;background:#f2ecf4"></div><div class="ab" style="left:138.8px;top:347.8px;width:1.8px;height:1.8px;background:#d8d8e6"></div><div class="ab" style="left:56px;top:352px;width:1.5px;height:11px;background:#a2a8cc"></div><div class="ab" style="left:76.5px;top:357px;width:4px;height:1px;background:#f2ecf4"></div><div class="ab" style="left:81.5px;top:357px;width:4px;height:1px;background:#f2ecf4"></div><div class="ab" style="left:86.5px;top:357px;width:4px;height:1px;background:#f2ecf4"></div><div class="ab" style="left:138.8px;top:359.8px;width:1.8px;height:1.8px;background:#d8d8e6"></div><div class="ab" style="left:76.5px;top:370px;width:4px;height:1px;background:#f2ecf4"></div><div class="ab" style="left:81.5px;top:370px;width:4px;height:1px;background:#f2ecf4"></div><div class="ab" style="left:86.5px;top:370px;width:4px;height:1px;background:#f2ecf4"></div><div class="ab" style="left:138.8px;top:372.8px;width:1.8px;height:1.8px;background:#d8d8e6"></div><div class="ab" style="left:76.5px;top:383px;width:4px;height:1px;background:#f2ecf4"></div><div class="ab" style="left:81.5px;top:383px;width:4px;height:1px;background:#f2ecf4"></div><div class="ab" style="left:86.5px;top:383px;width:4px;height:1px;background:#f2ecf4"></div><div class="ab" style="left:138.8px;top:385.8px;width:1.8px;height:1.8px;background:#d8d8e6"></div><div class="ab" style="left:76.5px;top:396px;width:4px;height:1px;background:#f2ecf4"></div><div class="ab" style="left:81.5px;top:396px;width:4px;height:1px;background:#f2ecf4"></div><div class="ab" style="left:86.5px;top:396px;width:4px;height:1px;background:#f2ecf4"></div><div class="ab" style="left:138.8px;top:398.8px;width:1.8px;height:1.8px;background:#d8d8e6"></div><div class="ab" style="left:56px;top:403px;width:1.5px;height:11px;background:#a2a8cc"></div><div class="ab" style="left:76.5px;top:408px;width:4px;height:1px;background:#f2ecf4"></div><div class="ab" style="left:81.5px;top:408px;width:4px;height:1px;background:#f2ecf4"></div><div class="ab" style="left:86.5px;top:408px;width:4px;height:1px;background:#f2ecf4"></div><div class="ab" style="left:138.8px;top:410.8px;width:1.8px;height:1.8px;background:#d8d8e6"></div><div class="ab" style="left:76.5px;top:421px;width:4px;height:1px;background:#f2ecf4"></div><div class="ab" style="left:81.5px;top:421px;width:4px;height:1px;background:#f2ecf4"></div><div class="ab" style="left:86.5px;top:421px;width:4px;height:1px;background:#f2ecf4"></div><div class="ab" style="left:138.8px;top:423.8px;width:1.8px;height:1.8px;background:#d8d8e6"></div><div class="ab" style="left:76.5px;top:434px;width:4px;height:1px;background:#f2ecf4"></div><div class="ab" style="left:81.5px;top:434px;width:4px;height:1px;background:#f2ecf4"></div><div class="ab" style="left:86.5px;top:434px;width:4px;height:1px;background:#f2ecf4"></div><div class="ab" style="left:138.8px;top:436.8px;width:1.8px;height:1.8px;background:#d8d8e6"></div><div class="ab" style="left:76.5px;top:446px;width:4px;height:1px;background:#f2ecf4"></div><div class="ab" style="left:81.5px;top:446px;width:4px;height:1px;background:#f2ecf4"></div><div class="ab" style="left:86.5px;top:446px;width:4px;height:1px;background:#f2ecf4"></div><div class="ab" style="left:138.8px;top:448.8px;width:1.8px;height:1.8px;background:#d8d8e6"></div><div class="ab" style="left:56px;top:454px;width:1.5px;height:11px;background:#a2a8cc"></div><div class="ab" style="left:76.5px;top:459px;width:4px;height:1px;background:#f2ecf4"></div><div class="ab" style="left:81.5px;top:459px;width:4px;height:1px;background:#f2ecf4"></div><div class="ab" style="left:86.5px;top:459px;width:4px;height:1px;background:#f2ecf4"></div><div class="ab" style="left:138.8px;top:461.8px;width:1.8px;height:1.8px;background:#d8d8e6"></div><div class="ab" style="left:76.5px;top:472px;width:4px;height:1px;background:#f2ecf4"></div><div class="ab" style="left:81.5px;top:472px;width:4px;height:1px;background:#f2ecf4"></div><div class="ab" style="left:86.5px;top:472px;width:4px;height:1px;background:#f2ecf4"></div><div class="ab" style="left:138.8px;top:474.8px;width:1.8px;height:1.8px;background:#d8d8e6"></div><div class="ab" style="left:76.5px;top:484px;width:4px;height:1px;background:#f2ecf4"></div><div class="ab" style="left:81.5px;top:484px;width:4px;height:1px;background:#f2ecf4"></div><div class="ab" style="left:86.5px;top:484px;width:4px;height:1px;background:#f2ecf4"></div><div class="ab" style="left:138.8px;top:486.8px;width:1.8px;height:1.8px;background:#d8d8e6"></div><div class="ab" style="left:76.5px;top:497px;width:4px;height:1px;background:#f2ecf4"></div><div class="ab" style="left:81.5px;top:497px;width:4px;height:1px;background:#f2ecf4"></div><div class="ab" style="left:86.5px;top:497px;width:4px;height:1px;background:#f2ecf4"></div><div class="ab" style="left:138.8px;top:499.8px;width:1.8px;height:1.8px;background:#d8d8e6"></div><div class="ab" style="left:56px;top:505px;width:1.5px;height:11px;background:#a2a8cc"></div><div class="ab" style="left:76.5px;top:510px;width:4px;height:1px;background:#f2ecf4"></div><div class="ab" style="left:81.5px;top:510px;width:4px;height:1px;background:#f2ecf4"></div><div class="ab" style="left:86.5px;top:510px;width:4px;height:1px;background:#f2ecf4"></div><div class="ab" style="left:138.8px;top:512.8px;width:1.8px;height:1.8px;background:#d8d8e6"></div><div class="ab" style="left:76.5px;top:522px;width:4px;height:1px;background:#f2ecf4"></div><div class="ab" style="left:81.5px;top:522px;width:4px;height:1px;background:#f2ecf4"></div><div class="ab" style="left:86.5px;top:522px;width:4px;height:1px;background:#f2ecf4"></div><div class="ab" style="left:138.8px;top:524.8px;width:1.8px;height:1.8px;background:#d8d8e6"></div><div class="ab" style="left:76.5px;top:535px;width:4px;height:1px;background:#f2ecf4"></div><div class="ab" style="left:81.5px;top:535px;width:4px;height:1px;background:#f2ecf4"></div><div class="ab" style="left:86.5px;top:535px;width:4px;height:1px;background:#f2ecf4"></div><div class="ab" style="left:138.8px;top:537.8px;width:1.8px;height:1.8px;background:#d8d8e6"></div><div class="ab" style="left:76.5px;top:548px;width:4px;height:1px;background:#f2ecf4"></div><div class="ab" style="left:81.5px;top:548px;width:4px;height:1px;background:#f2ecf4"></div><div class="ab" style="left:86.5px;top:548px;width:4px;height:1px;background:#f2ecf4"></div><div class="ab" style="left:138.8px;top:550.8px;width:1.8px;height:1.8px;background:#d8d8e6"></div><div class="ab" style="left:56px;top:556px;width:1.5px;height:11px;background:#a2a8cc"></div><div class="ab" style="left:76.5px;top:561px;width:4px;height:1px;background:#f2ecf4"></div><div class="ab" style="left:81.5px;top:561px;width:4px;height:1px;background:#f2ecf4"></div><div class="ab" style="left:86.5px;top:561px;width:4px;height:1px;background:#f2ecf4"></div><div class="ab" style="left:138.8px;top:563.8px;width:1.8px;height:1.8px;background:#d8d8e6"></div><div class="ab" style="left:76.5px;top:573px;width:4px;height:1px;background:#f2ecf4"></div><div class="ab" style="left:81.5px;top:573px;width:4px;height:1px;background:#f2ecf4"></div><div class="ab" style="left:86.5px;top:573px;width:4px;height:1px;background:#f2ecf4"></div><div class="ab" style="left:138.8px;top:575.8px;width:1.8px;height:1.8px;background:#d8d8e6"></div><div class="ab" style="left:76.5px;top:586px;width:4px;height:1px;background:#f2ecf4"></div><div class="ab" style="left:81.5px;top:586px;width:4px;height:1px;background:#f2ecf4"></div><div class="ab" style="left:86.5px;top:586px;width:4px;height:1px;background:#f2ecf4"></div><div class="ab" style="left:138.8px;top:588.8px;width:1.8px;height:1.8px;background:#d8d8e6"></div><div class="ab" style="left:76.5px;top:599px;width:4px;height:1px;background:#f2ecf4"></div><div class="ab" style="left:81.5px;top:599px;width:4px;height:1px;background:#f2ecf4"></div><div class="ab" style="left:86.5px;top:599px;width:4px;height:1px;background:#f2ecf4"></div><div class="ab" style="left:138.8px;top:601.8px;width:1.8px;height:1.8px;background:#d8d8e6"></div><div class="ab" style="left:56px;top:606px;width:1.5px;height:11px;background:#a2a8cc"></div><div class="ab" style="left:76.5px;top:611px;width:4px;height:1px;background:#f2ecf4"></div><div class="ab" style="left:81.5px;top:611px;width:4px;height:1px;background:#f2ecf4"></div><div class="ab" style="left:86.5px;top:611px;width:4px;height:1px;background:#f2ecf4"></div><div class="ab" style="left:138.8px;top:613.8px;width:1.8px;height:1.8px;background:#d8d8e6"></div><div class="ab" style="left:76.5px;top:624px;width:4px;height:1px;background:#f2ecf4"></div><div class="ab" style="left:81.5px;top:624px;width:4px;height:1px;background:#f2ecf4"></div><div class="ab" style="left:86.5px;top:624px;width:4px;height:1px;background:#f2ecf4"></div><div class="ab" style="left:138.8px;top:626.8px;width:1.8px;height:1.8px;background:#d8d8e6"></div><div class="ab" style="left:76.5px;top:637px;width:4px;height:1px;background:#f2ecf4"></div><div class="ab" style="left:81.5px;top:637px;width:4px;height:1px;background:#f2ecf4"></div><div class="ab" style="left:86.5px;top:637px;width:4px;height:1px;background:#f2ecf4"></div><div class="ab" style="left:138.8px;top:639.8px;width:1.8px;height:1.8px;background:#d8d8e6"></div><div class="ab" style="left:76.5px;top:650px;width:4px;height:1px;background:#f2ecf4"></div><div class="ab" style="left:81.5px;top:650px;width:4px;height:1px;background:#f2ecf4"></div><div class="ab" style="left:86.5px;top:650px;width:4px;height:1px;background:#f2ecf4"></div><div class="ab" style="left:138.8px;top:652.8px;width:1.8px;height:1.8px;background:#d8d8e6"></div><div class="ab" style="left:56px;top:657px;width:1.5px;height:11px;background:#a2a8cc"></div><div class="ab" style="left:76.5px;top:662px;width:4px;height:1px;background:#f2ecf4"></div><div class="ab" style="left:81.5px;top:662px;width:4px;height:1px;background:#f2ecf4"></div><div class="ab" style="left:86.5px;top:662px;width:4px;height:1px;background:#f2ecf4"></div><div class="ab" style="left:138.8px;top:664.8px;width:1.8px;height:1.8px;background:#d8d8e6"></div><div class="ab" style="left:76.5px;top:675px;width:4px;height:1px;background:#f2ecf4"></div><div class="ab" style="left:81.5px;top:675px;width:4px;height:1px;background:#f2ecf4"></div><div class="ab" style="left:86.5px;top:675px;width:4px;height:1px;background:#f2ecf4"></div><div class="ab" style="left:138.8px;top:677.8px;width:1.8px;height:1.8px;background:#d8d8e6"></div><div class="ab" style="left:186px;top:176px;width:133px;height:511px;background:linear-gradient(180deg,#3e6a52,#3a3852)"></div><div class="ab" style="left:187px;top:179px;width:131px;height:507px;background:linear-gradient(180deg,#28563a 0%,#28563a 6%,#2b3249 100%)"></div><div class="ab" style="left:191px;top:180px;width:123px;height:18px;background:#262439"></div><div class="ab" style="left:191px;top:198px;width:123px;height:1px;background:#3e6a52"></div><div class="ab cc" style="left:211.60px;top:182.80px;width:14px;height:14px;font-size:10px;font-weight:bold;color:#b0bfec"><span style="display:inline-block;transform:scaleY(1.02)">B</span></div><div class="ab rc" style="left:251px;top:183.20px;width:60px;height:14px;font-size:9.6px;letter-spacing:-0.9px;font-weight:bold;color:#d2d8f2"><span style="display:inline-block;transform:scaleY(1.08)">VOL F</span></div><div class="ab" style="left:191px;top:199px;width:123px;height:12px;background:#3b4b78"></div><div class="ab" style="left:191px;top:200px;width:1.5px;height:11px;background:#a2a8cc"></div><div class="ab" style="left:211.5px;top:205px;width:4px;height:1px;background:#f2ecf4"></div><div class="ab" style="left:216.5px;top:205px;width:4px;height:1px;background:#f2ecf4"></div><div class="ab" style="left:221.5px;top:205px;width:4px;height:1px;background:#f2ecf4"></div><div class="ab" style="left:273.8px;top:207.8px;width:1.8px;height:1.8px;background:#d8d8e6"></div><div class="ab" style="left:211.5px;top:218px;width:4px;height:1px;background:#f2ecf4"></div><div class="ab" style="left:216.5px;top:218px;width:4px;height:1px;background:#f2ecf4"></div><div class="ab" style="left:221.5px;top:218px;width:4px;height:1px;background:#f2ecf4"></div><div class="ab" style="left:273.8px;top:220.8px;width:1.8px;height:1.8px;background:#d8d8e6"></div><div class="ab" style="left:211.5px;top:230px;width:4px;height:1px;background:#f2ecf4"></div><div class="ab" style="left:216.5px;top:230px;width:4px;height:1px;background:#f2ecf4"></div><div class="ab" style="left:221.5px;top:230px;width:4px;height:1px;background:#f2ecf4"></div><div class="ab" style="left:273.8px;top:232.8px;width:1.8px;height:1.8px;background:#d8d8e6"></div><div class="ab" style="left:211.5px;top:243px;width:4px;height:1px;background:#f2ecf4"></div><div class="ab" style="left:216.5px;top:243px;width:4px;height:1px;background:#f2ecf4"></div><div class="ab" style="left:221.5px;top:243px;width:4px;height:1px;background:#f2ecf4"></div><div class="ab" style="left:273.8px;top:245.8px;width:1.8px;height:1.8px;background:#d8d8e6"></div><div class="ab" style="left:191px;top:251px;width:1.5px;height:11px;background:#a2a8cc"></div><div class="ab" style="left:211.5px;top:256px;width:4px;height:1px;background:#f2ecf4"></div><div class="ab" style="left:216.5px;top:256px;width:4px;height:1px;background:#f2ecf4"></div><div class="ab" style="left:221.5px;top:256px;width:4px;height:1px;background:#f2ecf4"></div><div class="ab" style="left:273.8px;top:258.8px;width:1.8px;height:1.8px;background:#d8d8e6"></div><div class="ab" style="left:211.5px;top:268px;width:4px;height:1px;background:#f2ecf4"></div><div class="ab" style="left:216.5px;top:268px;width:4px;height:1px;background:#f2ecf4"></div><div class="ab" style="left:221.5px;top:268px;width:4px;height:1px;background:#f2ecf4"></div><div class="ab" style="left:273.8px;top:270.8px;width:1.8px;height:1.8px;background:#d8d8e6"></div><div class="ab" style="left:211.5px;top:281px;width:4px;height:1px;background:#f2ecf4"></div><div class="ab" style="left:216.5px;top:281px;width:4px;height:1px;background:#f2ecf4"></div><div class="ab" style="left:221.5px;top:281px;width:4px;height:1px;background:#f2ecf4"></div><div class="ab" style="left:273.8px;top:283.8px;width:1.8px;height:1.8px;background:#d8d8e6"></div><div class="ab" style="left:211.5px;top:294px;width:4px;height:1px;background:#f2ecf4"></div><div class="ab" style="left:216.5px;top:294px;width:4px;height:1px;background:#f2ecf4"></div><div class="ab" style="left:221.5px;top:294px;width:4px;height:1px;background:#f2ecf4"></div><div class="ab" style="left:273.8px;top:296.8px;width:1.8px;height:1.8px;background:#d8d8e6"></div><div class="ab" style="left:191px;top:302px;width:1.5px;height:11px;background:#a2a8cc"></div><div class="ab" style="left:211.5px;top:307px;width:4px;height:1px;background:#f2ecf4"></div><div class="ab" style="left:216.5px;top:307px;width:4px;height:1px;background:#f2ecf4"></div><div class="ab" style="left:221.5px;top:307px;width:4px;height:1px;background:#f2ecf4"></div><div class="ab" style="left:273.8px;top:309.8px;width:1.8px;height:1.8px;background:#d8d8e6"></div><div class="ab" style="left:211.5px;top:319px;width:4px;height:1px;background:#f2ecf4"></div><div class="ab" style="left:216.5px;top:319px;width:4px;height:1px;background:#f2ecf4"></div><div class="ab" style="left:221.5px;top:319px;width:4px;height:1px;background:#f2ecf4"></div><div class="ab" style="left:273.8px;top:321.8px;width:1.8px;height:1.8px;background:#d8d8e6"></div><div class="ab" style="left:211.5px;top:332px;width:4px;height:1px;background:#f2ecf4"></div><div class="ab" style="left:216.5px;top:332px;width:4px;height:1px;background:#f2ecf4"></div><div class="ab" style="left:221.5px;top:332px;width:4px;height:1px;background:#f2ecf4"></div><div class="ab" style="left:273.8px;top:334.8px;width:1.8px;height:1.8px;background:#d8d8e6"></div><div class="ab" style="left:211.5px;top:345px;width:4px;height:1px;background:#f2ecf4"></div><div class="ab" style="left:216.5px;top:345px;width:4px;height:1px;background:#f2ecf4"></div><div class="ab" style="left:221.5px;top:345px;width:4px;height:1px;background:#f2ecf4"></div><div class="ab" style="left:273.8px;top:347.8px;width:1.8px;height:1.8px;background:#d8d8e6"></div><div class="ab" style="left:191px;top:352px;width:1.5px;height:11px;background:#a2a8cc"></div><div class="ab" style="left:211.5px;top:357px;width:4px;height:1px;background:#f2ecf4"></div><div class="ab" style="left:216.5px;top:357px;width:4px;height:1px;background:#f2ecf4"></div><div class="ab" style="left:221.5px;top:357px;width:4px;height:1px;background:#f2ecf4"></div><div class="ab" style="left:273.8px;top:359.8px;width:1.8px;height:1.8px;background:#d8d8e6"></div><div class="ab" style="left:211.5px;top:370px;width:4px;height:1px;background:#f2ecf4"></div><div class="ab" style="left:216.5px;top:370px;width:4px;height:1px;background:#f2ecf4"></div><div class="ab" style="left:221.5px;top:370px;width:4px;height:1px;background:#f2ecf4"></div><div class="ab" style="left:273.8px;top:372.8px;width:1.8px;height:1.8px;background:#d8d8e6"></div><div class="ab" style="left:211.5px;top:383px;width:4px;height:1px;background:#f2ecf4"></div><div class="ab" style="left:216.5px;top:383px;width:4px;height:1px;background:#f2ecf4"></div><div class="ab" style="left:221.5px;top:383px;width:4px;height:1px;background:#f2ecf4"></div><div class="ab" style="left:273.8px;top:385.8px;width:1.8px;height:1.8px;background:#d8d8e6"></div><div class="ab" style="left:211.5px;top:396px;width:4px;height:1px;background:#f2ecf4"></div><div class="ab" style="left:216.5px;top:396px;width:4px;height:1px;background:#f2ecf4"></div><div class="ab" style="left:221.5px;top:396px;width:4px;height:1px;background:#f2ecf4"></div><div class="ab" style="left:273.8px;top:398.8px;width:1.8px;height:1.8px;background:#d8d8e6"></div><div class="ab" style="left:191px;top:403px;width:1.5px;height:11px;background:#a2a8cc"></div><div class="ab" style="left:211.5px;top:408px;width:4px;height:1px;background:#f2ecf4"></div><div class="ab" style="left:216.5px;top:408px;width:4px;height:1px;background:#f2ecf4"></div><div class="ab" style="left:221.5px;top:408px;width:4px;height:1px;background:#f2ecf4"></div><div class="ab" style="left:273.8px;top:410.8px;width:1.8px;height:1.8px;background:#d8d8e6"></div><div class="ab" style="left:211.5px;top:421px;width:4px;height:1px;background:#f2ecf4"></div><div class="ab" style="left:216.5px;top:421px;width:4px;height:1px;background:#f2ecf4"></div><div class="ab" style="left:221.5px;top:421px;width:4px;height:1px;background:#f2ecf4"></div><div class="ab" style="left:273.8px;top:423.8px;width:1.8px;height:1.8px;background:#d8d8e6"></div><div class="ab" style="left:211.5px;top:434px;width:4px;height:1px;background:#f2ecf4"></div><div class="ab" style="left:216.5px;top:434px;width:4px;height:1px;background:#f2ecf4"></div><div class="ab" style="left:221.5px;top:434px;width:4px;height:1px;background:#f2ecf4"></div><div class="ab" style="left:273.8px;top:436.8px;width:1.8px;height:1.8px;background:#d8d8e6"></div><div class="ab" style="left:211.5px;top:446px;width:4px;height:1px;background:#f2ecf4"></div><div class="ab" style="left:216.5px;top:446px;width:4px;height:1px;background:#f2ecf4"></div><div class="ab" style="left:221.5px;top:446px;width:4px;height:1px;background:#f2ecf4"></div><div class="ab" style="left:273.8px;top:448.8px;width:1.8px;height:1.8px;background:#d8d8e6"></div><div class="ab" style="left:191px;top:454px;width:1.5px;height:11px;background:#a2a8cc"></div><div class="ab" style="left:211.5px;top:459px;width:4px;height:1px;background:#f2ecf4"></div><div class="ab" style="left:216.5px;top:459px;width:4px;height:1px;background:#f2ecf4"></div><div class="ab" style="left:221.5px;top:459px;width:4px;height:1px;background:#f2ecf4"></div><div class="ab" style="left:273.8px;top:461.8px;width:1.8px;height:1.8px;background:#d8d8e6"></div><div class="ab" style="left:211.5px;top:472px;width:4px;height:1px;background:#f2ecf4"></div><div class="ab" style="left:216.5px;top:472px;width:4px;height:1px;background:#f2ecf4"></div><div class="ab" style="left:221.5px;top:472px;width:4px;height:1px;background:#f2ecf4"></div><div class="ab" style="left:273.8px;top:474.8px;width:1.8px;height:1.8px;background:#d8d8e6"></div><div class="ab" style="left:211.5px;top:484px;width:4px;height:1px;background:#f2ecf4"></div><div class="ab" style="left:216.5px;top:484px;width:4px;height:1px;background:#f2ecf4"></div><div class="ab" style="left:221.5px;top:484px;width:4px;height:1px;background:#f2ecf4"></div><div class="ab" style="left:273.8px;top:486.8px;width:1.8px;height:1.8px;background:#d8d8e6"></div><div class="ab" style="left:211.5px;top:497px;width:4px;height:1px;background:#f2ecf4"></div><div class="ab" style="left:216.5px;top:497px;width:4px;height:1px;background:#f2ecf4"></div><div class="ab" style="left:221.5px;top:497px;width:4px;height:1px;background:#f2ecf4"></div><div class="ab" style="left:273.8px;top:499.8px;width:1.8px;height:1.8px;background:#d8d8e6"></div><div class="ab" style="left:191px;top:505px;width:1.5px;height:11px;background:#a2a8cc"></div><div class="ab" style="left:211.5px;top:510px;width:4px;height:1px;background:#f2ecf4"></div><div class="ab" style="left:216.5px;top:510px;width:4px;height:1px;background:#f2ecf4"></div><div class="ab" style="left:221.5px;top:510px;width:4px;height:1px;background:#f2ecf4"></div><div class="ab" style="left:273.8px;top:512.8px;width:1.8px;height:1.8px;background:#d8d8e6"></div><div class="ab" style="left:211.5px;top:522px;width:4px;height:1px;background:#f2ecf4"></div><div class="ab" style="left:216.5px;top:522px;width:4px;height:1px;background:#f2ecf4"></div><div class="ab" style="left:221.5px;top:522px;width:4px;height:1px;background:#f2ecf4"></div><div class="ab" style="left:273.8px;top:524.8px;width:1.8px;height:1.8px;background:#d8d8e6"></div><div class="ab" style="left:211.5px;top:535px;width:4px;height:1px;background:#f2ecf4"></div><div class="ab" style="left:216.5px;top:535px;width:4px;height:1px;background:#f2ecf4"></div><div class="ab" style="left:221.5px;top:535px;width:4px;height:1px;background:#f2ecf4"></div><div class="ab" style="left:273.8px;top:537.8px;width:1.8px;height:1.8px;background:#d8d8e6"></div><div class="ab" style="left:211.5px;top:548px;width:4px;height:1px;background:#f2ecf4"></div><div class="ab" style="left:216.5px;top:548px;width:4px;height:1px;background:#f2ecf4"></div><div class="ab" style="left:221.5px;top:548px;width:4px;height:1px;background:#f2ecf4"></div><div class="ab" style="left:273.8px;top:550.8px;width:1.8px;height:1.8px;background:#d8d8e6"></div><div class="ab" style="left:191px;top:556px;width:1.5px;height:11px;background:#a2a8cc"></div><div class="ab" style="left:211.5px;top:561px;width:4px;height:1px;background:#f2ecf4"></div><div class="ab" style="left:216.5px;top:561px;width:4px;height:1px;background:#f2ecf4"></div><div class="ab" style="left:221.5px;top:561px;width:4px;height:1px;background:#f2ecf4"></div><div class="ab" style="left:273.8px;top:563.8px;width:1.8px;height:1.8px;background:#d8d8e6"></div><div class="ab" style="left:211.5px;top:573px;width:4px;height:1px;background:#f2ecf4"></div><div class="ab" style="left:216.5px;top:573px;width:4px;height:1px;background:#f2ecf4"></div><div class="ab" style="left:221.5px;top:573px;width:4px;height:1px;background:#f2ecf4"></div><div class="ab" style="left:273.8px;top:575.8px;width:1.8px;height:1.8px;background:#d8d8e6"></div><div class="ab" style="left:211.5px;top:586px;width:4px;height:1px;background:#f2ecf4"></div><div class="ab" style="left:216.5px;top:586px;width:4px;height:1px;background:#f2ecf4"></div><div class="ab" style="left:221.5px;top:586px;width:4px;height:1px;background:#f2ecf4"></div><div class="ab" style="left:273.8px;top:588.8px;width:1.8px;height:1.8px;background:#d8d8e6"></div><div class="ab" style="left:211.5px;top:599px;width:4px;height:1px;background:#f2ecf4"></div><div class="ab" style="left:216.5px;top:599px;width:4px;height:1px;background:#f2ecf4"></div><div class="ab" style="left:221.5px;top:599px;width:4px;height:1px;background:#f2ecf4"></div><div class="ab" style="left:273.8px;top:601.8px;width:1.8px;height:1.8px;background:#d8d8e6"></div><div class="ab" style="left:191px;top:606px;width:1.5px;height:11px;background:#a2a8cc"></div><div class="ab" style="left:211.5px;top:611px;width:4px;height:1px;background:#f2ecf4"></div><div class="ab" style="left:216.5px;top:611px;width:4px;height:1px;background:#f2ecf4"></div><div class="ab" style="left:221.5px;top:611px;width:4px;height:1px;background:#f2ecf4"></div><div class="ab" style="left:273.8px;top:613.8px;width:1.8px;height:1.8px;background:#d8d8e6"></div><div class="ab" style="left:211.5px;top:624px;width:4px;height:1px;background:#f2ecf4"></div><div class="ab" style="left:216.5px;top:624px;width:4px;height:1px;background:#f2ecf4"></div><div class="ab" style="left:221.5px;top:624px;width:4px;height:1px;background:#f2ecf4"></div><div class="ab" style="left:273.8px;top:626.8px;width:1.8px;height:1.8px;background:#d8d8e6"></div><div class="ab" style="left:211.5px;top:637px;width:4px;height:1px;background:#f2ecf4"></div><div class="ab" style="left:216.5px;top:637px;width:4px;height:1px;background:#f2ecf4"></div><div class="ab" style="left:221.5px;top:637px;width:4px;height:1px;background:#f2ecf4"></div><div class="ab" style="left:273.8px;top:639.8px;width:1.8px;height:1.8px;background:#d8d8e6"></div><div class="ab" style="left:211.5px;top:650px;width:4px;height:1px;background:#f2ecf4"></div><div class="ab" style="left:216.5px;top:650px;width:4px;height:1px;background:#f2ecf4"></div><div class="ab" style="left:221.5px;top:650px;width:4px;height:1px;background:#f2ecf4"></div><div class="ab" style="left:273.8px;top:652.8px;width:1.8px;height:1.8px;background:#d8d8e6"></div><div class="ab" style="left:191px;top:657px;width:1.5px;height:11px;background:#a2a8cc"></div><div class="ab" style="left:211.5px;top:662px;width:4px;height:1px;background:#f2ecf4"></div><div class="ab" style="left:216.5px;top:662px;width:4px;height:1px;background:#f2ecf4"></div><div class="ab" style="left:221.5px;top:662px;width:4px;height:1px;background:#f2ecf4"></div><div class="ab" style="left:273.8px;top:664.8px;width:1.8px;height:1.8px;background:#d8d8e6"></div><div class="ab" style="left:211.5px;top:675px;width:4px;height:1px;background:#f2ecf4"></div><div class="ab" style="left:216.5px;top:675px;width:4px;height:1px;background:#f2ecf4"></div><div class="ab" style="left:221.5px;top:675px;width:4px;height:1px;background:#f2ecf4"></div><div class="ab" style="left:273.8px;top:677.8px;width:1.8px;height:1.8px;background:#d8d8e6"></div><div class="ab" style="left:320px;top:176px;width:133px;height:511px;background:linear-gradient(180deg,#3e3a86,#3a3852)"></div><div class="ab" style="left:321px;top:179px;width:131px;height:507px;background:linear-gradient(180deg,#282567 0%,#282567 6%,#2d2d4c 100%)"></div><div class="ab" style="left:325px;top:180px;width:123px;height:18px;background:#262439"></div><div class="ab" style="left:325px;top:198px;width:123px;height:1px;background:#3e3a86"></div><div class="ab cc" style="left:345.60px;top:182.80px;width:14px;height:14px;font-size:10px;font-weight:bold;color:#b0bfec"><span style="display:inline-block;transform:scaleY(1.02)">C</span></div><div class="ab rc" style="left:385px;top:183.20px;width:60px;height:14px;font-size:9.6px;letter-spacing:-0.9px;font-weight:bold;color:#d2d8f2"><span style="display:inline-block;transform:scaleY(1.08)">VOL F</span></div><div class="ab" style="left:325px;top:199px;width:123px;height:12px;background:#3b4b78"></div><div class="ab" style="left:325px;top:200px;width:1.5px;height:11px;background:#a2a8cc"></div><div class="ab" style="left:345.5px;top:205px;width:4px;height:1px;background:#f2ecf4"></div><div class="ab" style="left:350.5px;top:205px;width:4px;height:1px;background:#f2ecf4"></div><div class="ab" style="left:355.5px;top:205px;width:4px;height:1px;background:#f2ecf4"></div><div class="ab" style="left:407.8px;top:207.8px;width:1.8px;height:1.8px;background:#d8d8e6"></div><div class="ab" style="left:345.5px;top:218px;width:4px;height:1px;background:#f2ecf4"></div><div class="ab" style="left:350.5px;top:218px;width:4px;height:1px;background:#f2ecf4"></div><div class="ab" style="left:355.5px;top:218px;width:4px;height:1px;background:#f2ecf4"></div><div class="ab" style="left:407.8px;top:220.8px;width:1.8px;height:1.8px;background:#d8d8e6"></div><div class="ab" style="left:345.5px;top:230px;width:4px;height:1px;background:#f2ecf4"></div><div class="ab" style="left:350.5px;top:230px;width:4px;height:1px;background:#f2ecf4"></div><div class="ab" style="left:355.5px;top:230px;width:4px;height:1px;background:#f2ecf4"></div><div class="ab" style="left:407.8px;top:232.8px;width:1.8px;height:1.8px;background:#d8d8e6"></div><div class="ab" style="left:345.5px;top:243px;width:4px;height:1px;background:#f2ecf4"></div><div class="ab" style="left:350.5px;top:243px;width:4px;height:1px;background:#f2ecf4"></div><div class="ab" style="left:355.5px;top:243px;width:4px;height:1px;background:#f2ecf4"></div><div class="ab" style="left:407.8px;top:245.8px;width:1.8px;height:1.8px;background:#d8d8e6"></div><div class="ab" style="left:325px;top:251px;width:1.5px;height:11px;background:#a2a8cc"></div><div class="ab" style="left:345.5px;top:256px;width:4px;height:1px;background:#f2ecf4"></div><div class="ab" style="left:350.5px;top:256px;width:4px;height:1px;background:#f2ecf4"></div><div class="ab" style="left:355.5px;top:256px;width:4px;height:1px;background:#f2ecf4"></div><div class="ab" style="left:407.8px;top:258.8px;width:1.8px;height:1.8px;background:#d8d8e6"></div><div class="ab" style="left:345.5px;top:268px;width:4px;height:1px;background:#f2ecf4"></div><div class="ab" style="left:350.5px;top:268px;width:4px;height:1px;background:#f2ecf4"></div><div class="ab" style="left:355.5px;top:268px;width:4px;height:1px;background:#f2ecf4"></div><div class="ab" style="left:407.8px;top:270.8px;width:1.8px;height:1.8px;background:#d8d8e6"></div><div class="ab" style="left:345.5px;top:281px;width:4px;height:1px;background:#f2ecf4"></div><div class="ab" style="left:350.5px;top:281px;width:4px;height:1px;background:#f2ecf4"></div><div class="ab" style="left:355.5px;top:281px;width:4px;height:1px;background:#f2ecf4"></div><div class="ab" style="left:407.8px;top:283.8px;width:1.8px;height:1.8px;background:#d8d8e6"></div><div class="ab" style="left:345.5px;top:294px;width:4px;height:1px;background:#f2ecf4"></div><div class="ab" style="left:350.5px;top:294px;width:4px;height:1px;background:#f2ecf4"></div><div class="ab" style="left:355.5px;top:294px;width:4px;height:1px;background:#f2ecf4"></div><div class="ab" style="left:407.8px;top:296.8px;width:1.8px;height:1.8px;background:#d8d8e6"></div><div class="ab" style="left:325px;top:302px;width:1.5px;height:11px;background:#a2a8cc"></div><div class="ab" style="left:345.5px;top:307px;width:4px;height:1px;background:#f2ecf4"></div><div class="ab" style="left:350.5px;top:307px;width:4px;height:1px;background:#f2ecf4"></div><div class="ab" style="left:355.5px;top:307px;width:4px;height:1px;background:#f2ecf4"></div><div class="ab" style="left:407.8px;top:309.8px;width:1.8px;height:1.8px;background:#d8d8e6"></div><div class="ab" style="left:345.5px;top:319px;width:4px;height:1px;background:#f2ecf4"></div><div class="ab" style="left:350.5px;top:319px;width:4px;height:1px;background:#f2ecf4"></div><div class="ab" style="left:355.5px;top:319px;width:4px;height:1px;background:#f2ecf4"></div><div class="ab" style="left:407.8px;top:321.8px;width:1.8px;height:1.8px;background:#d8d8e6"></div><div class="ab" style="left:345.5px;top:332px;width:4px;height:1px;background:#f2ecf4"></div><div class="ab" style="left:350.5px;top:332px;width:4px;height:1px;background:#f2ecf4"></div><div class="ab" style="left:355.5px;top:332px;width:4px;height:1px;background:#f2ecf4"></div><div class="ab" style="left:407.8px;top:334.8px;width:1.8px;height:1.8px;background:#d8d8e6"></div><div class="ab" style="left:345.5px;top:345px;width:4px;height:1px;background:#f2ecf4"></div><div class="ab" style="left:350.5px;top:345px;width:4px;height:1px;background:#f2ecf4"></div><div class="ab" style="left:355.5px;top:345px;width:4px;height:1px;background:#f2ecf4"></div><div class="ab" style="left:407.8px;top:347.8px;width:1.8px;height:1.8px;background:#d8d8e6"></div><div class="ab" style="left:325px;top:352px;width:1.5px;height:11px;background:#a2a8cc"></div><div class="ab" style="left:345.5px;top:357px;width:4px;height:1px;background:#f2ecf4"></div><div class="ab" style="left:350.5px;top:357px;width:4px;height:1px;background:#f2ecf4"></div><div class="ab" style="left:355.5px;top:357px;width:4px;height:1px;background:#f2ecf4"></div><div class="ab" style="left:407.8px;top:359.8px;width:1.8px;height:1.8px;background:#d8d8e6"></div><div class="ab" style="left:345.5px;top:370px;width:4px;height:1px;background:#f2ecf4"></div><div class="ab" style="left:350.5px;top:370px;width:4px;height:1px;background:#f2ecf4"></div><div class="ab" style="left:355.5px;top:370px;width:4px;height:1px;background:#f2ecf4"></div><div class="ab" style="left:407.8px;top:372.8px;width:1.8px;height:1.8px;background:#d8d8e6"></div><div class="ab" style="left:345.5px;top:383px;width:4px;height:1px;background:#f2ecf4"></div><div class="ab" style="left:350.5px;top:383px;width:4px;height:1px;background:#f2ecf4"></div><div class="ab" style="left:355.5px;top:383px;width:4px;height:1px;background:#f2ecf4"></div><div class="ab" style="left:407.8px;top:385.8px;width:1.8px;height:1.8px;background:#d8d8e6"></div><div class="ab" style="left:345.5px;top:396px;width:4px;height:1px;background:#f2ecf4"></div><div class="ab" style="left:350.5px;top:396px;width:4px;height:1px;background:#f2ecf4"></div><div class="ab" style="left:355.5px;top:396px;width:4px;height:1px;background:#f2ecf4"></div><div class="ab" style="left:407.8px;top:398.8px;width:1.8px;height:1.8px;background:#d8d8e6"></div><div class="ab" style="left:325px;top:403px;width:1.5px;height:11px;background:#a2a8cc"></div><div class="ab" style="left:345.5px;top:408px;width:4px;height:1px;background:#f2ecf4"></div><div class="ab" style="left:350.5px;top:408px;width:4px;height:1px;background:#f2ecf4"></div><div class="ab" style="left:355.5px;top:408px;width:4px;height:1px;background:#f2ecf4"></div><div class="ab" style="left:407.8px;top:410.8px;width:1.8px;height:1.8px;background:#d8d8e6"></div><div class="ab" style="left:345.5px;top:421px;width:4px;height:1px;background:#f2ecf4"></div><div class="ab" style="left:350.5px;top:421px;width:4px;height:1px;background:#f2ecf4"></div><div class="ab" style="left:355.5px;top:421px;width:4px;height:1px;background:#f2ecf4"></div><div class="ab" style="left:407.8px;top:423.8px;width:1.8px;height:1.8px;background:#d8d8e6"></div><div class="ab" style="left:345.5px;top:434px;width:4px;height:1px;background:#f2ecf4"></div><div class="ab" style="left:350.5px;top:434px;width:4px;height:1px;background:#f2ecf4"></div><div class="ab" style="left:355.5px;top:434px;width:4px;height:1px;background:#f2ecf4"></div><div class="ab" style="left:407.8px;top:436.8px;width:1.8px;height:1.8px;background:#d8d8e6"></div><div class="ab" style="left:345.5px;top:446px;width:4px;height:1px;background:#f2ecf4"></div><div class="ab" style="left:350.5px;top:446px;width:4px;height:1px;background:#f2ecf4"></div><div class="ab" style="left:355.5px;top:446px;width:4px;height:1px;background:#f2ecf4"></div><div class="ab" style="left:407.8px;top:448.8px;width:1.8px;height:1.8px;background:#d8d8e6"></div><div class="ab" style="left:325px;top:454px;width:1.5px;height:11px;background:#a2a8cc"></div><div class="ab" style="left:345.5px;top:459px;width:4px;height:1px;background:#f2ecf4"></div><div class="ab" style="left:350.5px;top:459px;width:4px;height:1px;background:#f2ecf4"></div><div class="ab" style="left:355.5px;top:459px;width:4px;height:1px;background:#f2ecf4"></div><div class="ab" style="left:407.8px;top:461.8px;width:1.8px;height:1.8px;background:#d8d8e6"></div><div class="ab" style="left:345.5px;top:472px;width:4px;height:1px;background:#f2ecf4"></div><div class="ab" style="left:350.5px;top:472px;width:4px;height:1px;background:#f2ecf4"></div><div class="ab" style="left:355.5px;top:472px;width:4px;height:1px;background:#f2ecf4"></div><div class="ab" style="left:407.8px;top:474.8px;width:1.8px;height:1.8px;background:#d8d8e6"></div><div class="ab" style="left:345.5px;top:484px;width:4px;height:1px;background:#f2ecf4"></div><div class="ab" style="left:350.5px;top:484px;width:4px;height:1px;background:#f2ecf4"></div><div class="ab" style="left:355.5px;top:484px;width:4px;height:1px;background:#f2ecf4"></div><div class="ab" style="left:407.8px;top:486.8px;width:1.8px;height:1.8px;background:#d8d8e6"></div><div class="ab" style="left:345.5px;top:497px;width:4px;height:1px;background:#f2ecf4"></div><div class="ab" style="left:350.5px;top:497px;width:4px;height:1px;background:#f2ecf4"></div><div class="ab" style="left:355.5px;top:497px;width:4px;height:1px;background:#f2ecf4"></div><div class="ab" style="left:407.8px;top:499.8px;width:1.8px;height:1.8px;background:#d8d8e6"></div><div class="ab" style="left:325px;top:505px;width:1.5px;height:11px;background:#a2a8cc"></div><div class="ab" style="left:345.5px;top:510px;width:4px;height:1px;background:#f2ecf4"></div><div class="ab" style="left:350.5px;top:510px;width:4px;height:1px;background:#f2ecf4"></div><div class="ab" style="left:355.5px;top:510px;width:4px;height:1px;background:#f2ecf4"></div><div class="ab" style="left:407.8px;top:512.8px;width:1.8px;height:1.8px;background:#d8d8e6"></div><div class="ab" style="left:345.5px;top:522px;width:4px;height:1px;background:#f2ecf4"></div><div class="ab" style="left:350.5px;top:522px;width:4px;height:1px;background:#f2ecf4"></div><div class="ab" style="left:355.5px;top:522px;width:4px;height:1px;background:#f2ecf4"></div><div class="ab" style="left:407.8px;top:524.8px;width:1.8px;height:1.8px;background:#d8d8e6"></div><div class="ab" style="left:345.5px;top:535px;width:4px;height:1px;background:#f2ecf4"></div><div class="ab" style="left:350.5px;top:535px;width:4px;height:1px;background:#f2ecf4"></div><div class="ab" style="left:355.5px;top:535px;width:4px;height:1px;background:#f2ecf4"></div><div class="ab" style="left:407.8px;top:537.8px;width:1.8px;height:1.8px;background:#d8d8e6"></div><div class="ab" style="left:345.5px;top:548px;width:4px;height:1px;background:#f2ecf4"></div><div class="ab" style="left:350.5px;top:548px;width:4px;height:1px;background:#f2ecf4"></div><div class="ab" style="left:355.5px;top:548px;width:4px;height:1px;background:#f2ecf4"></div><div class="ab" style="left:407.8px;top:550.8px;width:1.8px;height:1.8px;background:#d8d8e6"></div><div class="ab" style="left:325px;top:556px;width:1.5px;height:11px;background:#a2a8cc"></div><div class="ab" style="left:345.5px;top:561px;width:4px;height:1px;background:#f2ecf4"></div><div class="ab" style="left:350.5px;top:561px;width:4px;height:1px;background:#f2ecf4"></div><div class="ab" style="left:355.5px;top:561px;width:4px;height:1px;background:#f2ecf4"></div><div class="ab" style="left:407.8px;top:563.8px;width:1.8px;height:1.8px;background:#d8d8e6"></div><div class="ab" style="left:345.5px;top:573px;width:4px;height:1px;background:#f2ecf4"></div><div class="ab" style="left:350.5px;top:573px;width:4px;height:1px;background:#f2ecf4"></div><div class="ab" style="left:355.5px;top:573px;width:4px;height:1px;background:#f2ecf4"></div><div class="ab" style="left:407.8px;top:575.8px;width:1.8px;height:1.8px;background:#d8d8e6"></div><div class="ab" style="left:345.5px;top:586px;width:4px;height:1px;background:#f2ecf4"></div><div class="ab" style="left:350.5px;top:586px;width:4px;height:1px;background:#f2ecf4"></div><div class="ab" style="left:355.5px;top:586px;width:4px;height:1px;background:#f2ecf4"></div><div class="ab" style="left:407.8px;top:588.8px;width:1.8px;height:1.8px;background:#d8d8e6"></div><div class="ab" style="left:345.5px;top:599px;width:4px;height:1px;background:#f2ecf4"></div><div class="ab" style="left:350.5px;top:599px;width:4px;height:1px;background:#f2ecf4"></div><div class="ab" style="left:355.5px;top:599px;width:4px;height:1px;background:#f2ecf4"></div><div class="ab" style="left:407.8px;top:601.8px;width:1.8px;height:1.8px;background:#d8d8e6"></div><div class="ab" style="left:325px;top:606px;width:1.5px;height:11px;background:#a2a8cc"></div><div class="ab" style="left:345.5px;top:611px;width:4px;height:1px;background:#f2ecf4"></div><div class="ab" style="left:350.5px;top:611px;width:4px;height:1px;background:#f2ecf4"></div><div class="ab" style="left:355.5px;top:611px;width:4px;height:1px;background:#f2ecf4"></div><div class="ab" style="left:407.8px;top:613.8px;width:1.8px;height:1.8px;background:#d8d8e6"></div><div class="ab" style="left:345.5px;top:624px;width:4px;height:1px;background:#f2ecf4"></div><div class="ab" style="left:350.5px;top:624px;width:4px;height:1px;background:#f2ecf4"></div><div class="ab" style="left:355.5px;top:624px;width:4px;height:1px;background:#f2ecf4"></div><div class="ab" style="left:407.8px;top:626.8px;width:1.8px;height:1.8px;background:#d8d8e6"></div><div class="ab" style="left:345.5px;top:637px;width:4px;height:1px;background:#f2ecf4"></div><div class="ab" style="left:350.5px;top:637px;width:4px;height:1px;background:#f2ecf4"></div><div class="ab" style="left:355.5px;top:637px;width:4px;height:1px;background:#f2ecf4"></div><div class="ab" style="left:407.8px;top:639.8px;width:1.8px;height:1.8px;background:#d8d8e6"></div><div class="ab" style="left:345.5px;top:650px;width:4px;height:1px;background:#f2ecf4"></div><div class="ab" style="left:350.5px;top:650px;width:4px;height:1px;background:#f2ecf4"></div><div class="ab" style="left:355.5px;top:650px;width:4px;height:1px;background:#f2ecf4"></div><div class="ab" style="left:407.8px;top:652.8px;width:1.8px;height:1.8px;background:#d8d8e6"></div><div class="ab" style="left:325px;top:657px;width:1.5px;height:11px;background:#a2a8cc"></div><div class="ab" style="left:345.5px;top:662px;width:4px;height:1px;background:#f2ecf4"></div><div class="ab" style="left:350.5px;top:662px;width:4px;height:1px;background:#f2ecf4"></div><div class="ab" style="left:355.5px;top:662px;width:4px;height:1px;background:#f2ecf4"></div><div class="ab" style="left:407.8px;top:664.8px;width:1.8px;height:1.8px;background:#d8d8e6"></div><div class="ab" style="left:345.5px;top:675px;width:4px;height:1px;background:#f2ecf4"></div><div class="ab" style="left:350.5px;top:675px;width:4px;height:1px;background:#f2ecf4"></div><div class="ab" style="left:355.5px;top:675px;width:4px;height:1px;background:#f2ecf4"></div><div class="ab" style="left:407.8px;top:677.8px;width:1.8px;height:1.8px;background:#d8d8e6"></div><div class="ab" style="left:457px;top:176px;width:653px;height:63px;background:#26243a;border:1px solid #3d3b55"></div><div class="ab cc" style="left:723.50px;top:181.50px;width:120px;height:14px;font-size:11px;font-weight:bold;letter-spacing:-0.1px;color:#eeeef6"><span style="display:inline-block;transform:scaleY(1.2)">Mode</span></div><div class="ab" style="left:461px;top:199px;width:19px;height:18px;background:#c8881e"></div><svg class="ab" style="left:468px;top:203px;" width="7" height="9" viewBox="0 0 7 9"><ellipse cx="2.2" cy="7" rx="1.9" ry="1.5" fill="#e9b24e"/><path d="M3.7 7 V1 Q5.6 2 6 3.8" fill="none" stroke="#e9b24e" stroke-width="1"/></svg><div class="ab cc" style="left:461.50px;top:223.50px;width:19px;height:12px;font-size:9.5px;font-weight:bold;color:#e4e4f0"><span style="display:inline-block;transform:scaleY(1.05)">T</span></div><div class="ab" style="left:481px;top:199px;width:19px;height:18px;background:#c8881e"></div><svg class="ab" style="left:488px;top:203px;" width="7" height="9" viewBox="0 0 7 9"><ellipse cx="2.2" cy="7" rx="1.9" ry="1.5" fill="#e9b24e"/><path d="M3.7 7 V1 Q5.6 2 6 3.8" fill="none" stroke="#e9b24e" stroke-width="1"/></svg><div class="ab cc" style="left:481.50px;top:223.50px;width:19px;height:12px;font-size:9.5px;font-weight:bold;color:#e4e4f0"><span style="display:inline-block;transform:scaleY(1.05)">T</span></div><div class="ab" style="left:501px;top:199px;width:19px;height:18px;background:#c8881e"></div><svg class="ab" style="left:508px;top:203px;" width="7" height="9" viewBox="0 0 7 9"><ellipse cx="2.2" cy="7" rx="1.9" ry="1.5" fill="#e9b24e"/><path d="M3.7 7 V1 Q5.6 2 6 3.8" fill="none" stroke="#e9b24e" stroke-width="1"/></svg><div class="ab cc" style="left:501.50px;top:223.50px;width:19px;height:12px;font-size:9.5px;font-weight:bold;color:#e4e4f0"><span style="display:inline-block;transform:scaleY(1.05)">T</span></div><div class="ab" style="left:521px;top:199px;width:19px;height:18px;background:#c8881e"></div><svg class="ab" style="left:528px;top:203px;" width="7" height="9" viewBox="0 0 7 9"><ellipse cx="2.2" cy="7" rx="1.9" ry="1.5" fill="#e9b24e"/><path d="M3.7 7 V1 Q5.6 2 6 3.8" fill="none" stroke="#e9b24e" stroke-width="1"/></svg><div class="ab cc" style="left:521.50px;top:223.50px;width:19px;height:12px;font-size:9.5px;font-weight:bold;color:#e4e4f0"><span style="display:inline-block;transform:scaleY(1.05)">T</span></div><div class="ab" style="left:541px;top:199px;width:20px;height:18px;background:#c8881e"></div><svg class="ab" style="left:548px;top:203px;" width="7" height="9" viewBox="0 0 7 9"><ellipse cx="2.2" cy="7" rx="1.9" ry="1.5" fill="#e9b24e"/><path d="M3.7 7 V1 Q5.6 2 6 3.8" fill="none" stroke="#e9b24e" stroke-width="1"/></svg><div class="ab cc" style="left:541.50px;top:223.50px;width:19px;height:12px;font-size:9.5px;font-weight:bold;color:#e4e4f0"><span style="display:inline-block;transform:scaleY(1.05)">T</span></div><div class="ab" style="left:562px;top:199px;width:19px;height:18px;background:#c8881e"></div><svg class="ab" style="left:569px;top:203px;" width="7" height="9" viewBox="0 0 7 9"><ellipse cx="2.2" cy="7" rx="1.9" ry="1.5" fill="#e9b24e"/><path d="M3.7 7 V1 Q5.6 2 6 3.8" fill="none" stroke="#e9b24e" stroke-width="1"/></svg><div class="ab cc" style="left:562.50px;top:223.50px;width:19px;height:12px;font-size:9.5px;font-weight:bold;color:#e4e4f0"><span style="display:inline-block;transform:scaleY(1.05)">T</span></div><div class="ab" style="left:582px;top:199px;width:19px;height:18px;background:#c8881e"></div><svg class="ab" style="left:589px;top:203px;" width="7" height="9" viewBox="0 0 7 9"><ellipse cx="2.2" cy="7" rx="1.9" ry="1.5" fill="#e9b24e"/><path d="M3.7 7 V1 Q5.6 2 6 3.8" fill="none" stroke="#e9b24e" stroke-width="1"/></svg><div class="ab cc" style="left:582.50px;top:223.50px;width:19px;height:12px;font-size:9.5px;font-weight:bold;color:#e4e4f0"><span style="display:inline-block;transform:scaleY(1.05)">T</span></div><div class="ab" style="left:602px;top:199px;width:19px;height:18px;background:#c8881e"></div><svg class="ab" style="left:609px;top:203px;" width="7" height="9" viewBox="0 0 7 9"><ellipse cx="2.2" cy="7" rx="1.9" ry="1.5" fill="#e9b24e"/><path d="M3.7 7 V1 Q5.6 2 6 3.8" fill="none" stroke="#e9b24e" stroke-width="1"/></svg><div class="ab cc" style="left:602.50px;top:223.50px;width:19px;height:12px;font-size:9.5px;font-weight:bold;color:#e4e4f0"><span style="display:inline-block;transform:scaleY(1.05)">T</span></div><div class="ab" style="left:622px;top:199px;width:19px;height:18px;background:#c8881e"></div><svg class="ab" style="left:629px;top:203px;" width="7" height="9" viewBox="0 0 7 9"><ellipse cx="2.2" cy="7" rx="1.9" ry="1.5" fill="#e9b24e"/><path d="M3.7 7 V1 Q5.6 2 6 3.8" fill="none" stroke="#e9b24e" stroke-width="1"/></svg><div class="ab cc" style="left:622.50px;top:223.50px;width:19px;height:12px;font-size:9.5px;font-weight:bold;color:#e4e4f0"><span style="display:inline-block;transform:scaleY(1.05)">T</span></div><div class="ab" style="left:642px;top:199px;width:19px;height:18px;background:#c8881e"></div><svg class="ab" style="left:649px;top:203px;" width="7" height="9" viewBox="0 0 7 9"><ellipse cx="2.2" cy="7" rx="1.9" ry="1.5" fill="#e9b24e"/><path d="M3.7 7 V1 Q5.6 2 6 3.8" fill="none" stroke="#e9b24e" stroke-width="1"/></svg><div class="ab cc" style="left:642.50px;top:223.50px;width:19px;height:12px;font-size:9.5px;font-weight:bold;color:#e4e4f0"><span style="display:inline-block;transform:scaleY(1.05)">T</span></div><div class="ab" style="left:662px;top:199px;width:20px;height:18px;background:#c8881e"></div><svg class="ab" style="left:669px;top:203px;" width="7" height="9" viewBox="0 0 7 9"><ellipse cx="2.2" cy="7" rx="1.9" ry="1.5" fill="#e9b24e"/><path d="M3.7 7 V1 Q5.6 2 6 3.8" fill="none" stroke="#e9b24e" stroke-width="1"/></svg><div class="ab cc" style="left:662.50px;top:223.50px;width:19px;height:12px;font-size:9.5px;font-weight:bold;color:#e4e4f0"><span style="display:inline-block;transform:scaleY(1.05)">T</span></div><div class="ab" style="left:683px;top:199px;width:19px;height:18px;background:#c8881e"></div><svg class="ab" style="left:690px;top:203px;" width="7" height="9" viewBox="0 0 7 9"><ellipse cx="2.2" cy="7" rx="1.9" ry="1.5" fill="#e9b24e"/><path d="M3.7 7 V1 Q5.6 2 6 3.8" fill="none" stroke="#e9b24e" stroke-width="1"/></svg><div class="ab cc" style="left:683.50px;top:223.50px;width:19px;height:12px;font-size:9.5px;font-weight:bold;color:#e4e4f0"><span style="display:inline-block;transform:scaleY(1.05)">T</span></div><div class="ab" style="left:703px;top:199px;width:19px;height:18px;background:#c8881e"></div><svg class="ab" style="left:710px;top:203px;" width="7" height="9" viewBox="0 0 7 9"><ellipse cx="2.2" cy="7" rx="1.9" ry="1.5" fill="#e9b24e"/><path d="M3.7 7 V1 Q5.6 2 6 3.8" fill="none" stroke="#e9b24e" stroke-width="1"/></svg><div class="ab cc" style="left:703.50px;top:223.50px;width:19px;height:12px;font-size:9.5px;font-weight:bold;color:#e4e4f0"><span style="display:inline-block;transform:scaleY(1.05)">T</span></div><div class="ab" style="left:723px;top:199px;width:19px;height:18px;background:#c8881e"></div><svg class="ab" style="left:730px;top:203px;" width="7" height="9" viewBox="0 0 7 9"><ellipse cx="2.2" cy="7" rx="1.9" ry="1.5" fill="#e9b24e"/><path d="M3.7 7 V1 Q5.6 2 6 3.8" fill="none" stroke="#e9b24e" stroke-width="1"/></svg><div class="ab cc" style="left:723.50px;top:223.50px;width:19px;height:12px;font-size:9.5px;font-weight:bold;color:#e4e4f0"><span style="display:inline-block;transform:scaleY(1.05)">T</span></div><div class="ab" style="left:743px;top:199px;width:19px;height:18px;background:#c8881e"></div><svg class="ab" style="left:750px;top:203px;" width="7" height="9" viewBox="0 0 7 9"><ellipse cx="2.2" cy="7" rx="1.9" ry="1.5" fill="#e9b24e"/><path d="M3.7 7 V1 Q5.6 2 6 3.8" fill="none" stroke="#e9b24e" stroke-width="1"/></svg><div class="ab cc" style="left:743.50px;top:223.50px;width:19px;height:12px;font-size:9.5px;font-weight:bold;color:#e4e4f0"><span style="display:inline-block;transform:scaleY(1.05)">T</span></div><div class="ab" style="left:763px;top:199px;width:19px;height:18px;background:#c8881e"></div><svg class="ab" style="left:770px;top:203px;" width="7" height="9" viewBox="0 0 7 9"><ellipse cx="2.2" cy="7" rx="1.9" ry="1.5" fill="#e9b24e"/><path d="M3.7 7 V1 Q5.6 2 6 3.8" fill="none" stroke="#e9b24e" stroke-width="1"/></svg><div class="ab cc" style="left:763.50px;top:223.50px;width:19px;height:12px;font-size:9.5px;font-weight:bold;color:#e4e4f0"><span style="display:inline-block;transform:scaleY(1.05)">T</span></div><div class="ab" style="left:783px;top:199px;width:20px;height:18px;background:#c8881e"></div><svg class="ab" style="left:790px;top:203px;" width="7" height="9" viewBox="0 0 7 9"><ellipse cx="2.2" cy="7" rx="1.9" ry="1.5" fill="#e9b24e"/><path d="M3.7 7 V1 Q5.6 2 6 3.8" fill="none" stroke="#e9b24e" stroke-width="1"/></svg><div class="ab cc" style="left:783.50px;top:223.50px;width:19px;height:12px;font-size:9.5px;font-weight:bold;color:#e4e4f0"><span style="display:inline-block;transform:scaleY(1.05)">T</span></div><div class="ab" style="left:804px;top:199px;width:19px;height:18px;background:#c8881e"></div><svg class="ab" style="left:811px;top:203px;" width="7" height="9" viewBox="0 0 7 9"><ellipse cx="2.2" cy="7" rx="1.9" ry="1.5" fill="#e9b24e"/><path d="M3.7 7 V1 Q5.6 2 6 3.8" fill="none" stroke="#e9b24e" stroke-width="1"/></svg><div class="ab cc" style="left:804.50px;top:223.50px;width:19px;height:12px;font-size:9.5px;font-weight:bold;color:#e4e4f0"><span style="display:inline-block;transform:scaleY(1.05)">T</span></div><div class="ab" style="left:824px;top:199px;width:19px;height:18px;background:#c8881e"></div><svg class="ab" style="left:831px;top:203px;" width="7" height="9" viewBox="0 0 7 9"><ellipse cx="2.2" cy="7" rx="1.9" ry="1.5" fill="#e9b24e"/><path d="M3.7 7 V1 Q5.6 2 6 3.8" fill="none" stroke="#e9b24e" stroke-width="1"/></svg><div class="ab cc" style="left:824.50px;top:223.50px;width:19px;height:12px;font-size:9.5px;font-weight:bold;color:#e4e4f0"><span style="display:inline-block;transform:scaleY(1.05)">T</span></div><div class="ab" style="left:844px;top:199px;width:19px;height:18px;background:#c8881e"></div><svg class="ab" style="left:851px;top:203px;" width="7" height="9" viewBox="0 0 7 9"><ellipse cx="2.2" cy="7" rx="1.9" ry="1.5" fill="#e9b24e"/><path d="M3.7 7 V1 Q5.6 2 6 3.8" fill="none" stroke="#e9b24e" stroke-width="1"/></svg><div class="ab cc" style="left:844.50px;top:223.50px;width:19px;height:12px;font-size:9.5px;font-weight:bold;color:#e4e4f0"><span style="display:inline-block;transform:scaleY(1.05)">T</span></div><div class="ab" style="left:864px;top:199px;width:19px;height:18px;background:#c8881e"></div><svg class="ab" style="left:871px;top:203px;" width="7" height="9" viewBox="0 0 7 9"><ellipse cx="2.2" cy="7" rx="1.9" ry="1.5" fill="#e9b24e"/><path d="M3.7 7 V1 Q5.6 2 6 3.8" fill="none" stroke="#e9b24e" stroke-width="1"/></svg><div class="ab cc" style="left:864.50px;top:223.50px;width:19px;height:12px;font-size:9.5px;font-weight:bold;color:#e4e4f0"><span style="display:inline-block;transform:scaleY(1.05)">T</span></div><div class="ab" style="left:884px;top:199px;width:19px;height:18px;background:#c8881e"></div><svg class="ab" style="left:891px;top:203px;" width="7" height="9" viewBox="0 0 7 9"><ellipse cx="2.2" cy="7" rx="1.9" ry="1.5" fill="#e9b24e"/><path d="M3.7 7 V1 Q5.6 2 6 3.8" fill="none" stroke="#e9b24e" stroke-width="1"/></svg><div class="ab cc" style="left:884.50px;top:223.50px;width:19px;height:12px;font-size:9.5px;font-weight:bold;color:#e4e4f0"><span style="display:inline-block;transform:scaleY(1.05)">T</span></div><div class="ab" style="left:904px;top:199px;width:20px;height:18px;background:#c8881e"></div><svg class="ab" style="left:911px;top:203px;" width="7" height="9" viewBox="0 0 7 9"><ellipse cx="2.2" cy="7" rx="1.9" ry="1.5" fill="#e9b24e"/><path d="M3.7 7 V1 Q5.6 2 6 3.8" fill="none" stroke="#e9b24e" stroke-width="1"/></svg><div class="ab cc" style="left:904.50px;top:223.50px;width:19px;height:12px;font-size:9.5px;font-weight:bold;color:#e4e4f0"><span style="display:inline-block;transform:scaleY(1.05)">T</span></div><div class="ab" style="left:925px;top:199px;width:19px;height:18px;background:#c8881e"></div><svg class="ab" style="left:932px;top:203px;" width="7" height="9" viewBox="0 0 7 9"><ellipse cx="2.2" cy="7" rx="1.9" ry="1.5" fill="#e9b24e"/><path d="M3.7 7 V1 Q5.6 2 6 3.8" fill="none" stroke="#e9b24e" stroke-width="1"/></svg><div class="ab cc" style="left:925.50px;top:223.50px;width:19px;height:12px;font-size:9.5px;font-weight:bold;color:#e4e4f0"><span style="display:inline-block;transform:scaleY(1.05)">T</span></div><div class="ab" style="left:945px;top:199px;width:19px;height:18px;background:#c8881e"></div><svg class="ab" style="left:952px;top:203px;" width="7" height="9" viewBox="0 0 7 9"><ellipse cx="2.2" cy="7" rx="1.9" ry="1.5" fill="#e9b24e"/><path d="M3.7 7 V1 Q5.6 2 6 3.8" fill="none" stroke="#e9b24e" stroke-width="1"/></svg><div class="ab cc" style="left:945.50px;top:223.50px;width:19px;height:12px;font-size:9.5px;font-weight:bold;color:#e4e4f0"><span style="display:inline-block;transform:scaleY(1.05)">T</span></div><div class="ab" style="left:965px;top:199px;width:19px;height:18px;background:#c8881e"></div><svg class="ab" style="left:972px;top:203px;" width="7" height="9" viewBox="0 0 7 9"><ellipse cx="2.2" cy="7" rx="1.9" ry="1.5" fill="#e9b24e"/><path d="M3.7 7 V1 Q5.6 2 6 3.8" fill="none" stroke="#e9b24e" stroke-width="1"/></svg><div class="ab cc" style="left:965.50px;top:223.50px;width:19px;height:12px;font-size:9.5px;font-weight:bold;color:#e4e4f0"><span style="display:inline-block;transform:scaleY(1.05)">T</span></div><div class="ab" style="left:985px;top:199px;width:19px;height:18px;background:#c8881e"></div><svg class="ab" style="left:992px;top:203px;" width="7" height="9" viewBox="0 0 7 9"><ellipse cx="2.2" cy="7" rx="1.9" ry="1.5" fill="#e9b24e"/><path d="M3.7 7 V1 Q5.6 2 6 3.8" fill="none" stroke="#e9b24e" stroke-width="1"/></svg><div class="ab cc" style="left:985.50px;top:223.50px;width:19px;height:12px;font-size:9.5px;font-weight:bold;color:#e4e4f0"><span style="display:inline-block;transform:scaleY(1.05)">T</span></div><div class="ab" style="left:1005px;top:199px;width:19px;height:18px;background:#c8881e"></div><svg class="ab" style="left:1012px;top:203px;" width="7" height="9" viewBox="0 0 7 9"><ellipse cx="2.2" cy="7" rx="1.9" ry="1.5" fill="#e9b24e"/><path d="M3.7 7 V1 Q5.6 2 6 3.8" fill="none" stroke="#e9b24e" stroke-width="1"/></svg><div class="ab cc" style="left:1005.50px;top:223.50px;width:19px;height:12px;font-size:9.5px;font-weight:bold;color:#e4e4f0"><span style="display:inline-block;transform:scaleY(1.05)">T</span></div><div class="ab" style="left:1025px;top:199px;width:20px;height:18px;background:#c8881e"></div><svg class="ab" style="left:1032px;top:203px;" width="7" height="9" viewBox="0 0 7 9"><ellipse cx="2.2" cy="7" rx="1.9" ry="1.5" fill="#e9b24e"/><path d="M3.7 7 V1 Q5.6 2 6 3.8" fill="none" stroke="#e9b24e" stroke-width="1"/></svg><div class="ab cc" style="left:1025.50px;top:223.50px;width:19px;height:12px;font-size:9.5px;font-weight:bold;color:#e4e4f0"><span style="display:inline-block;transform:scaleY(1.05)">T</span></div><div class="ab" style="left:1046px;top:199px;width:19px;height:18px;background:#c8881e"></div><svg class="ab" style="left:1053px;top:203px;" width="7" height="9" viewBox="0 0 7 9"><ellipse cx="2.2" cy="7" rx="1.9" ry="1.5" fill="#e9b24e"/><path d="M3.7 7 V1 Q5.6 2 6 3.8" fill="none" stroke="#e9b24e" stroke-width="1"/></svg><div class="ab cc" style="left:1046.50px;top:223.50px;width:19px;height:12px;font-size:9.5px;font-weight:bold;color:#e4e4f0"><span style="display:inline-block;transform:scaleY(1.05)">T</span></div><div class="ab" style="left:1066px;top:199px;width:19px;height:18px;background:#c8881e"></div><svg class="ab" style="left:1073px;top:203px;" width="7" height="9" viewBox="0 0 7 9"><ellipse cx="2.2" cy="7" rx="1.9" ry="1.5" fill="#e9b24e"/><path d="M3.7 7 V1 Q5.6 2 6 3.8" fill="none" stroke="#e9b24e" stroke-width="1"/></svg><div class="ab cc" style="left:1066.50px;top:223.50px;width:19px;height:12px;font-size:9.5px;font-weight:bold;color:#e4e4f0"><span style="display:inline-block;transform:scaleY(1.05)">T</span></div><div class="ab" style="left:1086px;top:199px;width:20px;height:18px;background:#c8881e"></div><svg class="ab" style="left:1093px;top:203px;" width="7" height="9" viewBox="0 0 7 9"><ellipse cx="2.2" cy="7" rx="1.9" ry="1.5" fill="#e9b24e"/><path d="M3.7 7 V1 Q5.6 2 6 3.8" fill="none" stroke="#e9b24e" stroke-width="1"/></svg><div class="ab cc" style="left:1086.50px;top:223.50px;width:19px;height:12px;font-size:9.5px;font-weight:bold;color:#e4e4f0"><span style="display:inline-block;transform:scaleY(1.05)">T</span></div><div class="ab" style="left:457px;top:242px;width:653px;height:117px;background:#26243a;border:1px solid #3d3b55"></div><div class="ab cc" style="left:723.50px;top:248.00px;width:120px;height:14px;font-size:11px;font-weight:bold;letter-spacing:-0.1px;color:#eeeef6"><span style="display:inline-block;transform:scaleY(1.2)">Volume</span></div><div class="ab" style="left:461px;top:317px;width:19px;height:2px;background:#5a6092"></div><div class="ab cc" style="left:459.50px;top:328.00px;width:23px;height:12px;font-size:7.8px;font-weight:bold;color:#d8d8ea"><span style="display:inline-block;transform:scaleY(1.4)">00</span></div><div class="ab" style="left:481px;top:317px;width:19px;height:2px;background:#5a6092"></div><div class="ab cc" style="left:479.50px;top:328.00px;width:23px;height:12px;font-size:7.8px;font-weight:bold;color:#d8d8ea"><span style="display:inline-block;transform:scaleY(1.4)">00</span></div><div class="ab" style="left:501px;top:317px;width:19px;height:2px;background:#5a6092"></div><div class="ab cc" style="left:499.50px;top:328.00px;width:23px;height:12px;font-size:7.8px;font-weight:bold;color:#d8d8ea"><span style="display:inline-block;transform:scaleY(1.4)">00</span></div><div class="ab" style="left:521px;top:317px;width:19px;height:2px;background:#5a6092"></div><div class="ab cc" style="left:519.50px;top:328.00px;width:23px;height:12px;font-size:7.8px;font-weight:bold;color:#d8d8ea"><span style="display:inline-block;transform:scaleY(1.4)">00</span></div><div class="ab" style="left:541px;top:317px;width:20px;height:2px;background:#5a6092"></div><div class="ab cc" style="left:539.50px;top:328.00px;width:23px;height:12px;font-size:7.8px;font-weight:bold;color:#d8d8ea"><span style="display:inline-block;transform:scaleY(1.4)">00</span></div><div class="ab" style="left:562px;top:317px;width:19px;height:2px;background:#5a6092"></div><div class="ab cc" style="left:560.50px;top:328.00px;width:23px;height:12px;font-size:7.8px;font-weight:bold;color:#d8d8ea"><span style="display:inline-block;transform:scaleY(1.4)">00</span></div><div class="ab" style="left:582px;top:317px;width:19px;height:2px;background:#5a6092"></div><div class="ab cc" style="left:580.50px;top:328.00px;width:23px;height:12px;font-size:7.8px;font-weight:bold;color:#d8d8ea"><span style="display:inline-block;transform:scaleY(1.4)">00</span></div><div class="ab" style="left:602px;top:317px;width:19px;height:2px;background:#5a6092"></div><div class="ab cc" style="left:600.50px;top:328.00px;width:23px;height:12px;font-size:7.8px;font-weight:bold;color:#d8d8ea"><span style="display:inline-block;transform:scaleY(1.4)">00</span></div><div class="ab" style="left:622px;top:317px;width:19px;height:2px;background:#5a6092"></div><div class="ab cc" style="left:620.50px;top:328.00px;width:23px;height:12px;font-size:7.8px;font-weight:bold;color:#d8d8ea"><span style="display:inline-block;transform:scaleY(1.4)">00</span></div><div class="ab" style="left:642px;top:317px;width:19px;height:2px;background:#5a6092"></div><div class="ab cc" style="left:640.50px;top:328.00px;width:23px;height:12px;font-size:7.8px;font-weight:bold;color:#d8d8ea"><span style="display:inline-block;transform:scaleY(1.4)">00</span></div><div class="ab" style="left:662px;top:317px;width:20px;height:2px;background:#5a6092"></div><div class="ab cc" style="left:660.50px;top:328.00px;width:23px;height:12px;font-size:7.8px;font-weight:bold;color:#d8d8ea"><span style="display:inline-block;transform:scaleY(1.4)">00</span></div><div class="ab" style="left:683px;top:317px;width:19px;height:2px;background:#5a6092"></div><div class="ab cc" style="left:681.50px;top:328.00px;width:23px;height:12px;font-size:7.8px;font-weight:bold;color:#d8d8ea"><span style="display:inline-block;transform:scaleY(1.4)">00</span></div><div class="ab" style="left:703px;top:317px;width:19px;height:2px;background:#5a6092"></div><div class="ab cc" style="left:701.50px;top:328.00px;width:23px;height:12px;font-size:7.8px;font-weight:bold;color:#d8d8ea"><span style="display:inline-block;transform:scaleY(1.4)">00</span></div><div class="ab" style="left:723px;top:317px;width:19px;height:2px;background:#5a6092"></div><div class="ab cc" style="left:721.50px;top:328.00px;width:23px;height:12px;font-size:7.8px;font-weight:bold;color:#d8d8ea"><span style="display:inline-block;transform:scaleY(1.4)">00</span></div><div class="ab" style="left:743px;top:317px;width:19px;height:2px;background:#5a6092"></div><div class="ab cc" style="left:741.50px;top:328.00px;width:23px;height:12px;font-size:7.8px;font-weight:bold;color:#d8d8ea"><span style="display:inline-block;transform:scaleY(1.4)">00</span></div><div class="ab" style="left:763px;top:317px;width:19px;height:2px;background:#5a6092"></div><div class="ab cc" style="left:761.50px;top:328.00px;width:23px;height:12px;font-size:7.8px;font-weight:bold;color:#d8d8ea"><span style="display:inline-block;transform:scaleY(1.4)">00</span></div><div class="ab" style="left:783px;top:317px;width:20px;height:2px;background:#5a6092"></div><div class="ab cc" style="left:781.50px;top:328.00px;width:23px;height:12px;font-size:7.8px;font-weight:bold;color:#d8d8ea"><span style="display:inline-block;transform:scaleY(1.4)">00</span></div><div class="ab" style="left:804px;top:317px;width:19px;height:2px;background:#5a6092"></div><div class="ab cc" style="left:802.50px;top:328.00px;width:23px;height:12px;font-size:7.8px;font-weight:bold;color:#d8d8ea"><span style="display:inline-block;transform:scaleY(1.4)">00</span></div><div class="ab" style="left:824px;top:317px;width:19px;height:2px;background:#5a6092"></div><div class="ab cc" style="left:822.50px;top:328.00px;width:23px;height:12px;font-size:7.8px;font-weight:bold;color:#d8d8ea"><span style="display:inline-block;transform:scaleY(1.4)">00</span></div><div class="ab" style="left:844px;top:317px;width:19px;height:2px;background:#5a6092"></div><div class="ab cc" style="left:842.50px;top:328.00px;width:23px;height:12px;font-size:7.8px;font-weight:bold;color:#d8d8ea"><span style="display:inline-block;transform:scaleY(1.4)">00</span></div><div class="ab" style="left:864px;top:317px;width:19px;height:2px;background:#5a6092"></div><div class="ab cc" style="left:862.50px;top:328.00px;width:23px;height:12px;font-size:7.8px;font-weight:bold;color:#d8d8ea"><span style="display:inline-block;transform:scaleY(1.4)">00</span></div><div class="ab" style="left:884px;top:317px;width:19px;height:2px;background:#5a6092"></div><div class="ab cc" style="left:882.50px;top:328.00px;width:23px;height:12px;font-size:7.8px;font-weight:bold;color:#d8d8ea"><span style="display:inline-block;transform:scaleY(1.4)">00</span></div><div class="ab" style="left:904px;top:317px;width:20px;height:2px;background:#5a6092"></div><div class="ab cc" style="left:902.50px;top:328.00px;width:23px;height:12px;font-size:7.8px;font-weight:bold;color:#d8d8ea"><span style="display:inline-block;transform:scaleY(1.4)">00</span></div><div class="ab" style="left:925px;top:317px;width:19px;height:2px;background:#5a6092"></div><div class="ab cc" style="left:923.50px;top:328.00px;width:23px;height:12px;font-size:7.8px;font-weight:bold;color:#d8d8ea"><span style="display:inline-block;transform:scaleY(1.4)">00</span></div><div class="ab" style="left:945px;top:317px;width:19px;height:2px;background:#5a6092"></div><div class="ab cc" style="left:943.50px;top:328.00px;width:23px;height:12px;font-size:7.8px;font-weight:bold;color:#d8d8ea"><span style="display:inline-block;transform:scaleY(1.4)">00</span></div><div class="ab" style="left:965px;top:317px;width:19px;height:2px;background:#5a6092"></div><div class="ab cc" style="left:963.50px;top:328.00px;width:23px;height:12px;font-size:7.8px;font-weight:bold;color:#d8d8ea"><span style="display:inline-block;transform:scaleY(1.4)">00</span></div><div class="ab" style="left:985px;top:317px;width:19px;height:2px;background:#5a6092"></div><div class="ab cc" style="left:983.50px;top:328.00px;width:23px;height:12px;font-size:7.8px;font-weight:bold;color:#d8d8ea"><span style="display:inline-block;transform:scaleY(1.4)">00</span></div><div class="ab" style="left:1005px;top:317px;width:19px;height:2px;background:#5a6092"></div><div class="ab cc" style="left:1003.50px;top:328.00px;width:23px;height:12px;font-size:7.8px;font-weight:bold;color:#d8d8ea"><span style="display:inline-block;transform:scaleY(1.4)">00</span></div><div class="ab" style="left:1025px;top:317px;width:20px;height:2px;background:#5a6092"></div><div class="ab cc" style="left:1023.50px;top:328.00px;width:23px;height:12px;font-size:7.8px;font-weight:bold;color:#d8d8ea"><span style="display:inline-block;transform:scaleY(1.4)">00</span></div><div class="ab" style="left:1046px;top:317px;width:19px;height:2px;background:#5a6092"></div><div class="ab cc" style="left:1044.50px;top:328.00px;width:23px;height:12px;font-size:7.8px;font-weight:bold;color:#d8d8ea"><span style="display:inline-block;transform:scaleY(1.4)">00</span></div><div class="ab" style="left:1066px;top:317px;width:19px;height:2px;background:#5a6092"></div><div class="ab cc" style="left:1064.50px;top:328.00px;width:23px;height:12px;font-size:7.8px;font-weight:bold;color:#d8d8ea"><span style="display:inline-block;transform:scaleY(1.4)">00</span></div><div class="ab" style="left:1086px;top:317px;width:20px;height:2px;background:#5a6092"></div><div class="ab cc" style="left:1084.50px;top:328.00px;width:23px;height:12px;font-size:7.8px;font-weight:bold;color:#d8d8ea"><span style="display:inline-block;transform:scaleY(1.4)">00</span></div><div class="ab" style="left:461px;top:342px;width:645px;height:1px;background:#3a3952"></div><div class="ab lc" style="left:461px;top:345.50px;height:12px;font-size:9.6px;color:#a9b0d8"><span style="display:inline-block;transform:scaleY(1.2)">Pos: 0</span></div><div class="ab rc" style="left:806px;top:345.50px;width:300px;height:12px;font-size:9.6px;color:#a9b0d8"><span style="display:inline-block;transform:scaleY(1.2)">Val: <span style="color:#7f9fe6">00</span></span></div><div class="ab" style="left:457px;top:364px;width:653px;height:118px;background:#26243a;border:1px solid #3d3b55"></div><div class="ab cc" style="left:723.50px;top:369.50px;width:120px;height:14px;font-size:11px;font-weight:bold;letter-spacing:-0.1px;color:#eeeef6"><span style="display:inline-block;transform:scaleY(1.2)">Arpeggio</span></div><div class="ab" style="left:461px;top:414px;width:644px;height:2px;background:#5a6092"></div><div class="ab cc" style="left:459.50px;top:450.00px;width:23px;height:12px;font-size:7.8px;font-weight:bold;color:#d8d8ea"><span style="display:inline-block;transform:scaleY(1.4)">+0</span></div><div class="ab cc" style="left:479.50px;top:450.00px;width:23px;height:12px;font-size:7.8px;font-weight:bold;color:#d8d8ea"><span style="display:inline-block;transform:scaleY(1.4)">+0</span></div><div class="ab cc" style="left:499.50px;top:450.00px;width:23px;height:12px;font-size:7.8px;font-weight:bold;color:#d8d8ea"><span style="display:inline-block;transform:scaleY(1.4)">+0</span></div><div class="ab cc" style="left:519.50px;top:450.00px;width:23px;height:12px;font-size:7.8px;font-weight:bold;color:#d8d8ea"><span style="display:inline-block;transform:scaleY(1.4)">+0</span></div><div class="ab cc" style="left:539.50px;top:450.00px;width:23px;height:12px;font-size:7.8px;font-weight:bold;color:#d8d8ea"><span style="display:inline-block;transform:scaleY(1.4)">+0</span></div><div class="ab cc" style="left:560.50px;top:450.00px;width:23px;height:12px;font-size:7.8px;font-weight:bold;color:#d8d8ea"><span style="display:inline-block;transform:scaleY(1.4)">+0</span></div><div class="ab cc" style="left:580.50px;top:450.00px;width:23px;height:12px;font-size:7.8px;font-weight:bold;color:#d8d8ea"><span style="display:inline-block;transform:scaleY(1.4)">+0</span></div><div class="ab cc" style="left:600.50px;top:450.00px;width:23px;height:12px;font-size:7.8px;font-weight:bold;color:#d8d8ea"><span style="display:inline-block;transform:scaleY(1.4)">+0</span></div><div class="ab cc" style="left:620.50px;top:450.00px;width:23px;height:12px;font-size:7.8px;font-weight:bold;color:#d8d8ea"><span style="display:inline-block;transform:scaleY(1.4)">+0</span></div><div class="ab cc" style="left:640.50px;top:450.00px;width:23px;height:12px;font-size:7.8px;font-weight:bold;color:#d8d8ea"><span style="display:inline-block;transform:scaleY(1.4)">+0</span></div><div class="ab cc" style="left:660.50px;top:450.00px;width:23px;height:12px;font-size:7.8px;font-weight:bold;color:#d8d8ea"><span style="display:inline-block;transform:scaleY(1.4)">+0</span></div><div class="ab cc" style="left:681.50px;top:450.00px;width:23px;height:12px;font-size:7.8px;font-weight:bold;color:#d8d8ea"><span style="display:inline-block;transform:scaleY(1.4)">+0</span></div><div class="ab cc" style="left:701.50px;top:450.00px;width:23px;height:12px;font-size:7.8px;font-weight:bold;color:#d8d8ea"><span style="display:inline-block;transform:scaleY(1.4)">+0</span></div><div class="ab cc" style="left:721.50px;top:450.00px;width:23px;height:12px;font-size:7.8px;font-weight:bold;color:#d8d8ea"><span style="display:inline-block;transform:scaleY(1.4)">+0</span></div><div class="ab cc" style="left:741.50px;top:450.00px;width:23px;height:12px;font-size:7.8px;font-weight:bold;color:#d8d8ea"><span style="display:inline-block;transform:scaleY(1.4)">+0</span></div><div class="ab cc" style="left:761.50px;top:450.00px;width:23px;height:12px;font-size:7.8px;font-weight:bold;color:#d8d8ea"><span style="display:inline-block;transform:scaleY(1.4)">+0</span></div><div class="ab cc" style="left:781.50px;top:450.00px;width:23px;height:12px;font-size:7.8px;font-weight:bold;color:#d8d8ea"><span style="display:inline-block;transform:scaleY(1.4)">+0</span></div><div class="ab cc" style="left:802.50px;top:450.00px;width:23px;height:12px;font-size:7.8px;font-weight:bold;color:#d8d8ea"><span style="display:inline-block;transform:scaleY(1.4)">+0</span></div><div class="ab cc" style="left:822.50px;top:450.00px;width:23px;height:12px;font-size:7.8px;font-weight:bold;color:#d8d8ea"><span style="display:inline-block;transform:scaleY(1.4)">+0</span></div><div class="ab cc" style="left:842.50px;top:450.00px;width:23px;height:12px;font-size:7.8px;font-weight:bold;color:#d8d8ea"><span style="display:inline-block;transform:scaleY(1.4)">+0</span></div><div class="ab cc" style="left:862.50px;top:450.00px;width:23px;height:12px;font-size:7.8px;font-weight:bold;color:#d8d8ea"><span style="display:inline-block;transform:scaleY(1.4)">+0</span></div><div class="ab cc" style="left:882.50px;top:450.00px;width:23px;height:12px;font-size:7.8px;font-weight:bold;color:#d8d8ea"><span style="display:inline-block;transform:scaleY(1.4)">+0</span></div><div class="ab cc" style="left:902.50px;top:450.00px;width:23px;height:12px;font-size:7.8px;font-weight:bold;color:#d8d8ea"><span style="display:inline-block;transform:scaleY(1.4)">+0</span></div><div class="ab cc" style="left:923.50px;top:450.00px;width:23px;height:12px;font-size:7.8px;font-weight:bold;color:#d8d8ea"><span style="display:inline-block;transform:scaleY(1.4)">+0</span></div><div class="ab cc" style="left:943.50px;top:450.00px;width:23px;height:12px;font-size:7.8px;font-weight:bold;color:#d8d8ea"><span style="display:inline-block;transform:scaleY(1.4)">+0</span></div><div class="ab cc" style="left:963.50px;top:450.00px;width:23px;height:12px;font-size:7.8px;font-weight:bold;color:#d8d8ea"><span style="display:inline-block;transform:scaleY(1.4)">+0</span></div><div class="ab cc" style="left:983.50px;top:450.00px;width:23px;height:12px;font-size:7.8px;font-weight:bold;color:#d8d8ea"><span style="display:inline-block;transform:scaleY(1.4)">+0</span></div><div class="ab cc" style="left:1003.50px;top:450.00px;width:23px;height:12px;font-size:7.8px;font-weight:bold;color:#d8d8ea"><span style="display:inline-block;transform:scaleY(1.4)">+0</span></div><div class="ab cc" style="left:1023.50px;top:450.00px;width:23px;height:12px;font-size:7.8px;font-weight:bold;color:#d8d8ea"><span style="display:inline-block;transform:scaleY(1.4)">+0</span></div><div class="ab cc" style="left:1044.50px;top:450.00px;width:23px;height:12px;font-size:7.8px;font-weight:bold;color:#d8d8ea"><span style="display:inline-block;transform:scaleY(1.4)">+0</span></div><div class="ab cc" style="left:1064.50px;top:450.00px;width:23px;height:12px;font-size:7.8px;font-weight:bold;color:#d8d8ea"><span style="display:inline-block;transform:scaleY(1.4)">+0</span></div><div class="ab cc" style="left:1084.50px;top:450.00px;width:23px;height:12px;font-size:7.8px;font-weight:bold;color:#d8d8ea"><span style="display:inline-block;transform:scaleY(1.4)">+0</span></div><div class="ab" style="left:461px;top:464px;width:645px;height:1px;background:#3a3952"></div><div class="ab lc" style="left:461px;top:467.00px;height:12px;font-size:9.6px;color:#a9b0d8"><span style="display:inline-block;transform:scaleY(1.2)">Pos: 0</span></div><div class="ab rc" style="left:806px;top:467.00px;width:300px;height:12px;font-size:9.6px;color:#a9b0d8"><span style="display:inline-block;transform:scaleY(1.2)">Val: <span style="color:#7f9fe6">+0</span></span></div><div class="ab" style="left:457px;top:486px;width:653px;height:117px;background:#26243a;border:1px solid #3d3b55"></div><div class="ab cc" style="left:723.50px;top:491.00px;width:120px;height:14px;font-size:11px;font-weight:bold;letter-spacing:-0.1px;color:#eeeef6"><span style="display:inline-block;transform:scaleY(1.2)">Pitch</span></div><div class="ab" style="left:461px;top:536px;width:644px;height:2px;background:#5a6092"></div><div class="ab cc" style="left:459.50px;top:571.50px;width:23px;height:12px;font-size:7.8px;font-weight:bold;color:#d8d8ea"><span style="display:inline-block;transform:scaleY(1.4)">+0</span></div><div class="ab cc" style="left:479.50px;top:571.50px;width:23px;height:12px;font-size:7.8px;font-weight:bold;color:#d8d8ea"><span style="display:inline-block;transform:scaleY(1.4)">+0</span></div><div class="ab cc" style="left:499.50px;top:571.50px;width:23px;height:12px;font-size:7.8px;font-weight:bold;color:#d8d8ea"><span style="display:inline-block;transform:scaleY(1.4)">+0</span></div><div class="ab cc" style="left:519.50px;top:571.50px;width:23px;height:12px;font-size:7.8px;font-weight:bold;color:#d8d8ea"><span style="display:inline-block;transform:scaleY(1.4)">+0</span></div><div class="ab cc" style="left:539.50px;top:571.50px;width:23px;height:12px;font-size:7.8px;font-weight:bold;color:#d8d8ea"><span style="display:inline-block;transform:scaleY(1.4)">+0</span></div><div class="ab cc" style="left:560.50px;top:571.50px;width:23px;height:12px;font-size:7.8px;font-weight:bold;color:#d8d8ea"><span style="display:inline-block;transform:scaleY(1.4)">+0</span></div><div class="ab cc" style="left:580.50px;top:571.50px;width:23px;height:12px;font-size:7.8px;font-weight:bold;color:#d8d8ea"><span style="display:inline-block;transform:scaleY(1.4)">+0</span></div><div class="ab cc" style="left:600.50px;top:571.50px;width:23px;height:12px;font-size:7.8px;font-weight:bold;color:#d8d8ea"><span style="display:inline-block;transform:scaleY(1.4)">+0</span></div><div class="ab cc" style="left:620.50px;top:571.50px;width:23px;height:12px;font-size:7.8px;font-weight:bold;color:#d8d8ea"><span style="display:inline-block;transform:scaleY(1.4)">+0</span></div><div class="ab cc" style="left:640.50px;top:571.50px;width:23px;height:12px;font-size:7.8px;font-weight:bold;color:#d8d8ea"><span style="display:inline-block;transform:scaleY(1.4)">+0</span></div><div class="ab cc" style="left:660.50px;top:571.50px;width:23px;height:12px;font-size:7.8px;font-weight:bold;color:#d8d8ea"><span style="display:inline-block;transform:scaleY(1.4)">+0</span></div><div class="ab cc" style="left:681.50px;top:571.50px;width:23px;height:12px;font-size:7.8px;font-weight:bold;color:#d8d8ea"><span style="display:inline-block;transform:scaleY(1.4)">+0</span></div><div class="ab cc" style="left:701.50px;top:571.50px;width:23px;height:12px;font-size:7.8px;font-weight:bold;color:#d8d8ea"><span style="display:inline-block;transform:scaleY(1.4)">+0</span></div><div class="ab cc" style="left:721.50px;top:571.50px;width:23px;height:12px;font-size:7.8px;font-weight:bold;color:#d8d8ea"><span style="display:inline-block;transform:scaleY(1.4)">+0</span></div><div class="ab cc" style="left:741.50px;top:571.50px;width:23px;height:12px;font-size:7.8px;font-weight:bold;color:#d8d8ea"><span style="display:inline-block;transform:scaleY(1.4)">+0</span></div><div class="ab cc" style="left:761.50px;top:571.50px;width:23px;height:12px;font-size:7.8px;font-weight:bold;color:#d8d8ea"><span style="display:inline-block;transform:scaleY(1.4)">+0</span></div><div class="ab cc" style="left:781.50px;top:571.50px;width:23px;height:12px;font-size:7.8px;font-weight:bold;color:#d8d8ea"><span style="display:inline-block;transform:scaleY(1.4)">+0</span></div><div class="ab cc" style="left:802.50px;top:571.50px;width:23px;height:12px;font-size:7.8px;font-weight:bold;color:#d8d8ea"><span style="display:inline-block;transform:scaleY(1.4)">+0</span></div><div class="ab cc" style="left:822.50px;top:571.50px;width:23px;height:12px;font-size:7.8px;font-weight:bold;color:#d8d8ea"><span style="display:inline-block;transform:scaleY(1.4)">+0</span></div><div class="ab cc" style="left:842.50px;top:571.50px;width:23px;height:12px;font-size:7.8px;font-weight:bold;color:#d8d8ea"><span style="display:inline-block;transform:scaleY(1.4)">+0</span></div><div class="ab cc" style="left:862.50px;top:571.50px;width:23px;height:12px;font-size:7.8px;font-weight:bold;color:#d8d8ea"><span style="display:inline-block;transform:scaleY(1.4)">+0</span></div><div class="ab cc" style="left:882.50px;top:571.50px;width:23px;height:12px;font-size:7.8px;font-weight:bold;color:#d8d8ea"><span style="display:inline-block;transform:scaleY(1.4)">+0</span></div><div class="ab cc" style="left:902.50px;top:571.50px;width:23px;height:12px;font-size:7.8px;font-weight:bold;color:#d8d8ea"><span style="display:inline-block;transform:scaleY(1.4)">+0</span></div><div class="ab cc" style="left:923.50px;top:571.50px;width:23px;height:12px;font-size:7.8px;font-weight:bold;color:#d8d8ea"><span style="display:inline-block;transform:scaleY(1.4)">+0</span></div><div class="ab cc" style="left:943.50px;top:571.50px;width:23px;height:12px;font-size:7.8px;font-weight:bold;color:#d8d8ea"><span style="display:inline-block;transform:scaleY(1.4)">+0</span></div><div class="ab cc" style="left:963.50px;top:571.50px;width:23px;height:12px;font-size:7.8px;font-weight:bold;color:#d8d8ea"><span style="display:inline-block;transform:scaleY(1.4)">+0</span></div><div class="ab cc" style="left:983.50px;top:571.50px;width:23px;height:12px;font-size:7.8px;font-weight:bold;color:#d8d8ea"><span style="display:inline-block;transform:scaleY(1.4)">+0</span></div><div class="ab cc" style="left:1003.50px;top:571.50px;width:23px;height:12px;font-size:7.8px;font-weight:bold;color:#d8d8ea"><span style="display:inline-block;transform:scaleY(1.4)">+0</span></div><div class="ab cc" style="left:1023.50px;top:571.50px;width:23px;height:12px;font-size:7.8px;font-weight:bold;color:#d8d8ea"><span style="display:inline-block;transform:scaleY(1.4)">+0</span></div><div class="ab cc" style="left:1044.50px;top:571.50px;width:23px;height:12px;font-size:7.8px;font-weight:bold;color:#d8d8ea"><span style="display:inline-block;transform:scaleY(1.4)">+0</span></div><div class="ab cc" style="left:1064.50px;top:571.50px;width:23px;height:12px;font-size:7.8px;font-weight:bold;color:#d8d8ea"><span style="display:inline-block;transform:scaleY(1.4)">+0</span></div><div class="ab cc" style="left:1084.50px;top:571.50px;width:23px;height:12px;font-size:7.8px;font-weight:bold;color:#d8d8ea"><span style="display:inline-block;transform:scaleY(1.4)">+0</span></div><div class="ab" style="left:461px;top:586px;width:645px;height:1px;background:#3a3952"></div><div class="ab lc" style="left:461px;top:588.50px;height:12px;font-size:9.6px;color:#a9b0d8"><span style="display:inline-block;transform:scaleY(1.2)">Pos: 0</span></div><div class="ab rc" style="left:806px;top:588.50px;width:300px;height:12px;font-size:9.6px;color:#a9b0d8"><span style="display:inline-block;transform:scaleY(1.2)">Val: <span style="color:#7f9fe6">+0</span></span></div><div class="ab" style="left:457px;top:607px;width:653px;height:85px;background:#26243a;border:1px solid #3d3b55"></div><div class="ab cc" style="left:723.50px;top:612.50px;width:120px;height:14px;font-size:11px;font-weight:bold;letter-spacing:-0.1px;color:#eeeef6"><span style="display:inline-block;transform:scaleY(1.2)">Noise</span></div><div class="ab" style="left:461px;top:682px;width:19px;height:2px;background:#5a6092"></div><div class="ab" style="left:481px;top:682px;width:19px;height:2px;background:#5a6092"></div><div class="ab" style="left:501px;top:682px;width:19px;height:2px;background:#5a6092"></div><div class="ab" style="left:521px;top:682px;width:19px;height:2px;background:#5a6092"></div><div class="ab" style="left:541px;top:682px;width:20px;height:2px;background:#5a6092"></div><div class="ab" style="left:562px;top:682px;width:19px;height:2px;background:#5a6092"></div><div class="ab" style="left:582px;top:682px;width:19px;height:2px;background:#5a6092"></div><div class="ab" style="left:602px;top:682px;width:19px;height:2px;background:#5a6092"></div><div class="ab" style="left:622px;top:682px;width:19px;height:2px;background:#5a6092"></div><div class="ab" style="left:642px;top:682px;width:19px;height:2px;background:#5a6092"></div><div class="ab" style="left:662px;top:682px;width:20px;height:2px;background:#5a6092"></div><div class="ab" style="left:683px;top:682px;width:19px;height:2px;background:#5a6092"></div><div class="ab" style="left:703px;top:682px;width:19px;height:2px;background:#5a6092"></div><div class="ab" style="left:723px;top:682px;width:19px;height:2px;background:#5a6092"></div><div class="ab" style="left:743px;top:682px;width:19px;height:2px;background:#5a6092"></div><div class="ab" style="left:763px;top:682px;width:19px;height:2px;background:#5a6092"></div><div class="ab" style="left:783px;top:682px;width:20px;height:2px;background:#5a6092"></div><div class="ab" style="left:804px;top:682px;width:19px;height:2px;background:#5a6092"></div><div class="ab" style="left:824px;top:682px;width:19px;height:2px;background:#5a6092"></div><div class="ab" style="left:844px;top:682px;width:19px;height:2px;background:#5a6092"></div><div class="ab" style="left:864px;top:682px;width:19px;height:2px;background:#5a6092"></div><div class="ab" style="left:884px;top:682px;width:19px;height:2px;background:#5a6092"></div><div class="ab" style="left:904px;top:682px;width:20px;height:2px;background:#5a6092"></div><div class="ab" style="left:925px;top:682px;width:19px;height:2px;background:#5a6092"></div><div class="ab" style="left:945px;top:682px;width:19px;height:2px;background:#5a6092"></div><div class="ab" style="left:965px;top:682px;width:19px;height:2px;background:#5a6092"></div><div class="ab" style="left:985px;top:682px;width:19px;height:2px;background:#5a6092"></div><div class="ab" style="left:1005px;top:682px;width:19px;height:2px;background:#5a6092"></div><div class="ab" style="left:1025px;top:682px;width:20px;height:2px;background:#5a6092"></div><div class="ab" style="left:1046px;top:682px;width:19px;height:2px;background:#5a6092"></div><div class="ab" style="left:1066px;top:682px;width:19px;height:2px;background:#5a6092"></div><div class="ab" style="left:1086px;top:682px;width:20px;height:2px;background:#5a6092"></div><div class="ab" style="left:1113px;top:176px;width:348px;height:109px;background:#26243a;border:1px solid #3d3b55"></div><div class="ab cc" style="left:1227.00px;top:181.00px;width:120px;height:14px;font-size:11px;font-weight:bold;letter-spacing:-0.1px;color:#eeeef6"><span style="display:inline-block;transform:scaleY(1.2)">Song</span></div><div class="ab lc" style="left:1127px;top:201.00px;height:14px;font-size:9.8px;letter-spacing:-0.2px;color:#a9b0dc"><span style="display:inline-block;transform:scaleY(1.2)">Title:</span></div><div class="ab" style="left:1184px;top:199px;width:264px;height:17px;background:#2d2d47;border:1px solid #3b3b57"></div><div class="ab lc" style="left:1189px;top:200.50px;height:14px;font-size:9.8px;letter-spacing:-0.2px;color:#e6e6f2"><span style="display:inline-block;transform:scaleY(1.2)">New Song</span></div><div class="ab lc" style="left:1127px;top:221.80px;height:14px;font-size:9.8px;letter-spacing:-0.2px;color:#a9b0dc"><span style="display:inline-block;transform:scaleY(1.2)">Author:</span></div><div class="ab" style="left:1184px;top:219px;width:264px;height:18px;background:#2d2d47;border:1px solid #3b3b57"></div><div class="ab lc" style="left:1189px;top:221.00px;height:14px;font-size:9.8px;letter-spacing:-0.2px;color:#e6e6f2"><span style="display:inline-block;transform:scaleY(1.2)">Author Name</span></div><div class="ab lc" style="left:1127px;top:242.00px;height:14px;font-size:9.8px;letter-spacing:-0.2px;color:#a9b0dc"><span style="display:inline-block;transform:scaleY(1.2)">Year:</span></div><div class="ab" style="left:1184px;top:240px;width:37px;height:18px;background:#2b2b44;border:1px solid #3b3b57"></div><div class="ab cc" style="left:1184.00px;top:242.00px;width:37px;height:14px;font-size:9.8px;color:#dedeec"><span style="display:inline-block;transform:scaleY(1.2)">2026</span></div><div class="ab" style="left:1223px;top:240px;width:16px;height:17px;background:#ebe8f2;border-radius:3px;box-shadow:inset 0 -1px 0 #c8c4d4"></div><svg class="ab" style="left:1223.5px;top:242px;" width="15" height="13" viewBox="0 0 15 13"><path d="M3.5 8 L7.5 4 L11.5 8" fill="none" stroke="#1a1a22" stroke-width="1.5"/></svg><div class="ab" style="left:1241px;top:240px;width:16px;height:17px;background:#ebe8f2;border-radius:3px;box-shadow:inset 0 -1px 0 #c8c4d4"></div><svg class="ab" style="left:1241.5px;top:242px;" width="15" height="13" viewBox="0 0 15 13"><path d="M3.5 5 L7.5 9 L11.5 5" fill="none" stroke="#1a1a22" stroke-width="1.5"/></svg><div class="ab lc" style="left:1127px;top:264.00px;height:14px;font-size:9.8px;letter-spacing:-0.2px;color:#a9b0dc"><span style="display:inline-block;transform:scaleY(1.2)">Speed:</span></div><div class="ab" style="left:1184px;top:262px;width:37px;height:18px;background:#2b2b44;border:1px solid #3b3b57"></div><div class="ab cc" style="left:1184.00px;top:264.00px;width:37px;height:14px;font-size:9.8px;color:#dedeec"><span style="display:inline-block;transform:scaleY(1.2)">6</span></div><div class="ab" style="left:1223px;top:262px;width:16px;height:17px;background:#ebe8f2;border-radius:3px;box-shadow:inset 0 -1px 0 #c8c4d4"></div><svg class="ab" style="left:1223.5px;top:264px;" width="15" height="13" viewBox="0 0 15 13"><path d="M3.5 8 L7.5 4 L11.5 8" fill="none" stroke="#1a1a22" stroke-width="1.5"/></svg><div class="ab" style="left:1241px;top:262px;width:16px;height:17px;background:#ebe8f2;border-radius:3px;box-shadow:inset 0 -1px 0 #c8c4d4"></div><svg class="ab" style="left:1241.5px;top:264px;" width="15" height="13" viewBox="0 0 15 13"><path d="M3.5 5 L7.5 9 L11.5 5" fill="none" stroke="#1a1a22" stroke-width="1.5"/></svg><div class="ab lc" style="left:1317px;top:242.00px;height:14px;font-size:9.8px;letter-spacing:-0.2px;color:#a9b0dc"><span style="display:inline-block;transform:scaleY(1.2)">Length:</span></div><div class="ab" style="left:1375px;top:240px;width:36px;height:18px;background:#2b2b44;border:1px solid #3b3b57"></div><div class="ab cc" style="left:1375.00px;top:242.00px;width:36px;height:14px;font-size:9.8px;color:#dedeec"><span style="display:inline-block;transform:scaleY(1.2)">64</span></div><div class="ab" style="left:1414px;top:240px;width:16px;height:17px;background:#ebe8f2;border-radius:3px;box-shadow:inset 0 -1px 0 #c8c4d4"></div><svg class="ab" style="left:1414.5px;top:242px;" width="15" height="13" viewBox="0 0 15 13"><path d="M3.5 8 L7.5 4 L11.5 8" fill="none" stroke="#1a1a22" stroke-width="1.5"/></svg><div class="ab" style="left:1432px;top:240px;width:16px;height:17px;background:#ebe8f2;border-radius:3px;box-shadow:inset 0 -1px 0 #c8c4d4"></div><svg class="ab" style="left:1432.5px;top:242px;" width="15" height="13" viewBox="0 0 15 13"><path d="M3.5 5 L7.5 9 L11.5 5" fill="none" stroke="#1a1a22" stroke-width="1.5"/></svg><div class="ab lc" style="left:1317px;top:264.00px;height:14px;font-size:9.8px;letter-spacing:-0.2px;color:#a9b0dc"><span style="display:inline-block;transform:scaleY(1.2)">Loop:</span></div><div class="ab" style="left:1375px;top:262px;width:36px;height:18px;background:#2b2b44;border:1px solid #3b3b57"></div><div class="ab cc" style="left:1375.00px;top:264.00px;width:36px;height:14px;font-size:9.8px;color:#dedeec"><span style="display:inline-block;transform:scaleY(1.2)"></span></div><div class="ab" style="left:1414px;top:262px;width:16px;height:17px;background:#ebe8f2;border-radius:3px;box-shadow:inset 0 -1px 0 #c8c4d4"></div><svg class="ab" style="left:1414.5px;top:264px;" width="15" height="13" viewBox="0 0 15 13"><path d="M3.5 8 L7.5 4 L11.5 8" fill="none" stroke="#1a1a22" stroke-width="1.5"/></svg><div class="ab" style="left:1432px;top:262px;width:16px;height:17px;background:#ebe8f2;border-radius:3px;box-shadow:inset 0 -1px 0 #c8c4d4"></div><svg class="ab" style="left:1432.5px;top:264px;" width="15" height="13" viewBox="0 0 15 13"><path d="M3.5 5 L7.5 9 L11.5 5" fill="none" stroke="#1a1a22" stroke-width="1.5"/></svg><div class="ab" style="left:1113px;top:288px;width:348px;height:154px;background:#26243a;border:1px solid #3d3b55"></div><div class="ab cc" style="left:1227.00px;top:292.50px;width:120px;height:14px;font-size:11px;font-weight:bold;letter-spacing:-0.1px;color:#eeeef6"><span style="display:inline-block;transform:scaleY(1.2)">Playlist</span></div><div class="ab" style="left:1145px;top:311px;width:84px;height:18px;background:#262b46;border:1px solid #3c4470;box-shadow:0 0 4px 1px rgba(110,130,200,.3)"></div><div class="ab cc" style="left:1177.00px;top:313.50px;width:20px;height:14px;font-size:9.4px;font-weight:bold;color:#c0c8f0"><span style="display:inline-block;transform:scaleY(1.05)">A</span></div><div class="ab" style="left:1235px;top:311px;width:83px;height:18px;background:#2b2a40"></div><div class="ab cc" style="left:1266.50px;top:313.50px;width:20px;height:14px;font-size:9.4px;font-weight:bold;color:#dcdcec"><span style="display:inline-block;transform:scaleY(1.05)">B</span></div><div class="ab" style="left:1326px;top:311px;width:83px;height:18px;background:#2b2a40"></div><div class="ab cc" style="left:1357.50px;top:313.50px;width:20px;height:14px;font-size:9.4px;font-weight:bold;color:#dcdcec"><span style="display:inline-block;transform:scaleY(1.05)">C</span></div><div class="ab" style="left:1444px;top:334px;width:12px;height:103px;background:#171717"></div><div class="ab" style="left:1117px;top:334px;width:327px;height:17px;background:#4a2348;border:1px solid #c67ab8"></div><div class="ab cc" style="left:1122.00px;top:337.50px;width:20px;height:12px;font-size:9.6px;color:#8a7e96"><span style="display:inline-block;transform:scaleY(1.2)">00</span></div><div class="ab cc" style="left:1175.50px;top:337.50px;width:20px;height:12px;font-size:9.6px;font-weight:bold;color:#e8e2ee"><span style="display:inline-block;transform:scaleY(1.2)">01</span></div><div class="ab cc" style="left:1264.00px;top:337.50px;width:20px;height:12px;font-size:9.6px;font-weight:bold;color:#e8e2ee"><span style="display:inline-block;transform:scaleY(1.2)">02</span></div><div class="ab cc" style="left:1353.00px;top:337.50px;width:20px;height:12px;font-size:9.6px;font-weight:bold;color:#e8e2ee"><span style="display:inline-block;transform:scaleY(1.2)">03</span></div><div class="ab" style="left:1409px;top:335px;width:17px;height:15px;background:#52304f;border-left:1px solid #5a3a5a"></div><div class="ab" style="left:1426px;top:335px;width:17px;height:15px;background:#52304f;border-left:1px solid #5a3a5a"></div><svg class="ab" style="left:1412px;top:338px;" width="11" height="8" viewBox="0 0 11 8"><path d="M1.5 2 L5.5 6 L9.5 2" fill="none" stroke="#8a7090" stroke-width="1.1"/></svg><svg class="ab" style="left:1429px;top:338px;" width="11" height="8" viewBox="0 0 11 8"><path d="M1.5 6 L5.5 2 L9.5 6" fill="none" stroke="#8a7090" stroke-width="1.1"/></svg><div class="ab" style="left:1113px;top:447px;width:348px;height:156px;background:#26243a;border:1px solid #3d3b55"></div><div class="ab cc" style="left:1217.00px;top:451.00px;width:140px;height:14px;font-size:11px;font-weight:bold;letter-spacing:-0.1px;color:#eeeef6"><span style="display:inline-block;transform:scaleY(1.2)">Instrument</span></div><div class="ab" style="left:1444px;top:469px;width:12px;height:129px;background:#171717"></div><div class="ab" style="left:1117px;top:469px;width:327px;height:17px;background:#28304f;border:1px solid #8c9ce2"></div><div class="ab cc" style="left:1123.00px;top:472.50px;width:20px;height:12px;font-size:9.6px;font-weight:bold;color:#eceef8"><span style="display:inline-block;transform:scaleY(1.2)">00</span></div><div class="ab" style="left:1151px;top:470px;width:1px;height:15px;background:#3c4466"></div><div class="ab" style="left:1152px;top:470px;width:206px;height:15px;background:#262b48"></div><div class="ab" style="left:1358px;top:470px;width:1px;height:15px;background:#3c4466"></div><svg class="ab" style="left:1364px;top:472px;" width="11" height="11" viewBox="0 0 11 11"><circle cx="5.5" cy="5.5" r="4.6" fill="#262b48" stroke="#dcdcec" stroke-width="1.2"/><path d="M2.2 8.8 A4.6 4.6 0 0 1 8.8 2.2 Z" fill="#dcdcec"/></svg><div class="ab" style="left:1380px;top:470px;width:1px;height:15px;background:#3c4466"></div><div class="ab cc" style="left:1379.50px;top:472.50px;width:30px;height:12px;font-size:8.6px;letter-spacing:-0.3px;color:#b8bce0"><span style="display:inline-block;transform:scaleY(1.2)">MIDI</span></div><div class="ab" style="left:1408px;top:470px;width:1px;height:15px;background:#3c4466"></div><div class="ab" style="left:1426px;top:470px;width:1px;height:15px;background:#3c4466"></div><svg class="ab" style="left:1413px;top:474px;" width="11" height="8" viewBox="0 0 11 8"><path d="M1.5 2 L5.5 6 L9.5 2" fill="none" stroke="#8c90b4" stroke-width="1.1"/></svg><svg class="ab" style="left:1430px;top:473px;" width="11" height="8" viewBox="0 0 11 8"><path d="M1.5 6 L5.5 2 L9.5 6" fill="none" stroke="#8c90b4" stroke-width="1.1"/></svg><div class="ab" style="left:1113px;top:607px;width:227px;height:80px;background:#26243a;border:1px solid #3d3b55"></div><div class="ab cc" style="left:1186.50px;top:610.50px;width:80px;height:14px;font-size:9.4px;font-weight:bold;letter-spacing:-0.4px;color:#dcdcec"><span style="display:inline-block;transform:scaleY(1.1)">Dump</span></div><div class="ab lc" style="left:1119px;top:627.50px;height:10px;font-family:'Liberation Serif',serif;font-size:8px;color:#a4a4dc">TA</div><div class="ab rc" style="left:1150.5px;top:627.50px;width:60px;height:10px;font-family:'Liberation Mono',monospace;font-size:8px;letter-spacing:-0.4px;color:#e4e4ec">$01DD</div><div class="ab lc" style="left:1243px;top:627.50px;height:10px;font-family:'Liberation Serif',serif;font-size:8px;color:#a4a4dc">VA</div><div class="ab rc" style="left:1274px;top:627.50px;width:60px;height:10px;font-family:'Liberation Mono',monospace;font-size:8px;letter-spacing:-0.4px;color:#e4e4ec">$0</div><div class="ab lc" style="left:1119px;top:640.20px;height:10px;font-family:'Liberation Serif',serif;font-size:8px;color:#a4a4dc">TB</div><div class="ab rc" style="left:1150.5px;top:640.20px;width:60px;height:10px;font-family:'Liberation Mono',monospace;font-size:8px;letter-spacing:-0.4px;color:#e4e4ec">$0000</div><div class="ab lc" style="left:1243px;top:640.20px;height:10px;font-family:'Liberation Serif',serif;font-size:8px;color:#a4a4dc">VB</div><div class="ab rc" style="left:1274px;top:640.20px;width:60px;height:10px;font-family:'Liberation Mono',monospace;font-size:8px;letter-spacing:-0.4px;color:#e4e4ec">$0</div><div class="ab lc" style="left:1119px;top:652.40px;height:10px;font-family:'Liberation Serif',serif;font-size:8px;color:#a4a4dc">TC</div><div class="ab rc" style="left:1150.5px;top:652.40px;width:60px;height:10px;font-family:'Liberation Mono',monospace;font-size:8px;letter-spacing:-0.4px;color:#e4e4ec">$0000</div><div class="ab lc" style="left:1243px;top:652.40px;height:10px;font-family:'Liberation Serif',serif;font-size:8px;color:#a4a4dc">VC</div><div class="ab rc" style="left:1274px;top:652.40px;width:60px;height:10px;font-family:'Liberation Mono',monospace;font-size:8px;letter-spacing:-0.4px;color:#e4e4ec">$0</div><div class="ab lc" style="left:1119px;top:664.60px;height:10px;font-family:'Liberation Serif',serif;font-size:8px;color:#a4a4dc">MX</div><div class="ab rc" style="left:1150.5px;top:664.60px;width:60px;height:10px;font-family:'Liberation Mono',monospace;font-size:8px;letter-spacing:-0.4px;color:#e4e4ec">$38</div><div class="ab lc" style="left:1243px;top:664.60px;height:10px;font-family:'Liberation Serif',serif;font-size:8px;color:#a4a4dc">NS</div><div class="ab rc" style="left:1274px;top:664.60px;width:60px;height:10px;font-family:'Liberation Mono',monospace;font-size:8px;letter-spacing:-0.4px;color:#e4e4ec">$00</div><div class="ab" style="left:1343px;top:607px;width:118px;height:80px;background:#26243a;border:1px solid #3d3b55"></div><div class="ab cc" style="left:1382.50px;top:610.50px;width:40px;height:14px;font-size:9.4px;font-weight:bold;letter-spacing:-0.4px;color:#dcdcec"><span style="display:inline-block;transform:scaleY(1.1)">EQ</span></div><div class="ab" style="left:1379px;top:626px;width:11px;height:46px;background:#33334b;border:1px solid #45455e"></div><div class="ab cc" style="left:1378.50px;top:673.00px;width:12px;height:10px;font-size:7.6px;color:#c4c4dc"><span style="display:inline-block;transform:scaleY(1.35)">A</span></div><div class="ab" style="left:1397px;top:626px;width:11px;height:46px;background:#33334b;border:1px solid #45455e"></div><div class="ab cc" style="left:1396.50px;top:673.00px;width:12px;height:10px;font-size:7.6px;color:#c4c4dc"><span style="display:inline-block;transform:scaleY(1.35)">B</span></div><div class="ab" style="left:1415px;top:626px;width:11px;height:46px;background:#33334b;border:1px solid #45455e"></div><div class="ab cc" style="left:1414.50px;top:673.00px;width:12px;height:10px;font-size:7.6px;color:#c4c4dc"><span style="display:inline-block;transform:scaleY(1.35)">C</span></div><div class="ab" style="left:14px;top:691px;width:1451px;height:1px;background:#4a4862"></div><div class="ab" style="left:14px;top:692px;width:1451px;height:99px;background:#2c2a42"></div><div class="ab" style="left:18px;top:695px;width:1443px;height:87px;background:linear-gradient(180deg,#1e1e1f,#2a2929);border:1px solid #4a4862;border-left-color:#3a384f;border-radius:3px 3px 0 0"></div><div class="ab" style="left:14px;top:786px;width:1451px;height:5px;background:#20202c"></div><div class="ab" style="left:58px;top:788px;width:28px;height:3px;background:#2e2e3a"></div><div class="ab" style="left:124px;top:788px;width:28px;height:3px;background:#2e2e3a"></div><div class="ab" style="left:340px;top:703px;width:800px;height:71px;background:#101011;border-radius:2px"></div><div class="ab" style="left:343px;top:706px;width:21px;height:65px;background:linear-gradient(180deg,#f0f0f0,#ffffff 60%,#e6e6e6);border-radius:0 0 2px 2px"></div><div class="ab cc" style="left:341.50px;top:754.00px;width:24px;height:10px;font-size:7px;color:#555"><span style="display:inline-block;transform:scaleY(1.4)">C2</span></div><div class="ab" style="left:365px;top:706px;width:21px;height:65px;background:linear-gradient(180deg,#f0f0f0,#ffffff 60%,#e6e6e6);border-radius:0 0 2px 2px"></div><div class="ab cc" style="left:363.50px;top:754.00px;width:24px;height:10px;font-size:7px;color:#555"><span style="display:inline-block;transform:scaleY(1.4)">D2</span></div><div class="ab" style="left:388px;top:706px;width:21px;height:65px;background:linear-gradient(180deg,#f0f0f0,#ffffff 60%,#e6e6e6);border-radius:0 0 2px 2px"></div><div class="ab cc" style="left:386.50px;top:754.00px;width:24px;height:10px;font-size:7px;color:#555"><span style="display:inline-block;transform:scaleY(1.4)">E2</span></div><div class="ab" style="left:411px;top:706px;width:21px;height:65px;background:linear-gradient(180deg,#f0f0f0,#ffffff 60%,#e6e6e6);border-radius:0 0 2px 2px"></div><div class="ab cc" style="left:409.50px;top:754.00px;width:24px;height:10px;font-size:7px;color:#555"><span style="display:inline-block;transform:scaleY(1.4)">F2</span></div><div class="ab" style="left:433px;top:706px;width:21px;height:65px;background:linear-gradient(180deg,#f0f0f0,#ffffff 60%,#e6e6e6);border-radius:0 0 2px 2px"></div><div class="ab cc" style="left:431.50px;top:754.00px;width:24px;height:10px;font-size:7px;color:#555"><span style="display:inline-block;transform:scaleY(1.4)">G2</span></div><div class="ab" style="left:456px;top:706px;width:21px;height:65px;background:linear-gradient(180deg,#f0f0f0,#ffffff 60%,#e6e6e6);border-radius:0 0 2px 2px"></div><div class="ab cc" style="left:454.50px;top:754.00px;width:24px;height:10px;font-size:7px;color:#555"><span style="display:inline-block;transform:scaleY(1.4)">A2</span></div><div class="ab" style="left:479px;top:706px;width:21px;height:65px;background:linear-gradient(180deg,#f0f0f0,#ffffff 60%,#e6e6e6);border-radius:0 0 2px 2px"></div><div class="ab cc" style="left:477.50px;top:754.00px;width:24px;height:10px;font-size:7px;color:#555"><span style="display:inline-block;transform:scaleY(1.4)">B2</span></div><div class="ab" style="left:501px;top:706px;width:21px;height:65px;background:linear-gradient(180deg,#f0f0f0,#ffffff 60%,#e6e6e6);border-radius:0 0 2px 2px"></div><div class="ab cc" style="left:499.50px;top:754.00px;width:24px;height:10px;font-size:7px;color:#555"><span style="display:inline-block;transform:scaleY(1.4)">C3</span></div><div class="ab" style="left:524px;top:706px;width:21px;height:65px;background:linear-gradient(180deg,#f0f0f0,#ffffff 60%,#e6e6e6);border-radius:0 0 2px 2px"></div><div class="ab cc" style="left:522.50px;top:754.00px;width:24px;height:10px;font-size:7px;color:#555"><span style="display:inline-block;transform:scaleY(1.4)">D3</span></div><div class="ab" style="left:547px;top:706px;width:21px;height:65px;background:linear-gradient(180deg,#f0f0f0,#ffffff 60%,#e6e6e6);border-radius:0 0 2px 2px"></div><div class="ab cc" style="left:545.50px;top:754.00px;width:24px;height:10px;font-size:7px;color:#555"><span style="display:inline-block;transform:scaleY(1.4)">E3</span></div><div class="ab" style="left:570px;top:706px;width:21px;height:65px;background:linear-gradient(180deg,#f0f0f0,#ffffff 60%,#e6e6e6);border-radius:0 0 2px 2px"></div><div class="ab cc" style="left:568.50px;top:754.00px;width:24px;height:10px;font-size:7px;color:#555"><span style="display:inline-block;transform:scaleY(1.4)">F3</span></div><div class="ab" style="left:592px;top:706px;width:21px;height:65px;background:linear-gradient(180deg,#f0f0f0,#ffffff 60%,#e6e6e6);border-radius:0 0 2px 2px"></div><div class="ab cc" style="left:590.50px;top:754.00px;width:24px;height:10px;font-size:7px;color:#555"><span style="display:inline-block;transform:scaleY(1.4)">G3</span></div><div class="ab" style="left:615px;top:706px;width:21px;height:65px;background:linear-gradient(180deg,#f0f0f0,#ffffff 60%,#e6e6e6);border-radius:0 0 2px 2px"></div><div class="ab cc" style="left:613.50px;top:754.00px;width:24px;height:10px;font-size:7px;color:#555"><span style="display:inline-block;transform:scaleY(1.4)">A3</span></div><div class="ab" style="left:638px;top:706px;width:21px;height:65px;background:linear-gradient(180deg,#f0f0f0,#ffffff 60%,#e6e6e6);border-radius:0 0 2px 2px"></div><div class="ab cc" style="left:636.50px;top:754.00px;width:24px;height:10px;font-size:7px;color:#555"><span style="display:inline-block;transform:scaleY(1.4)">B3</span></div><div class="ab" style="left:660px;top:706px;width:21px;height:65px;background:linear-gradient(180deg,#f0f0f0,#ffffff 60%,#e6e6e6);border-radius:0 0 2px 2px"></div><div class="ab cc" style="left:658.50px;top:754.00px;width:24px;height:10px;font-size:7px;color:#555"><span style="display:inline-block;transform:scaleY(1.4)">C4</span></div><div class="ab" style="left:683px;top:706px;width:21px;height:65px;background:linear-gradient(180deg,#f0f0f0,#ffffff 60%,#e6e6e6);border-radius:0 0 2px 2px"></div><div class="ab cc" style="left:681.50px;top:754.00px;width:24px;height:10px;font-size:7px;color:#555"><span style="display:inline-block;transform:scaleY(1.4)">D4</span></div><div class="ab" style="left:706px;top:706px;width:21px;height:65px;background:linear-gradient(180deg,#f0f0f0,#ffffff 60%,#e6e6e6);border-radius:0 0 2px 2px"></div><div class="ab cc" style="left:704.50px;top:754.00px;width:24px;height:10px;font-size:7px;color:#555"><span style="display:inline-block;transform:scaleY(1.4)">E4</span></div><div class="ab" style="left:728px;top:706px;width:21px;height:65px;background:linear-gradient(180deg,#f0f0f0,#ffffff 60%,#e6e6e6);border-radius:0 0 2px 2px"></div><div class="ab cc" style="left:726.50px;top:754.00px;width:24px;height:10px;font-size:7px;color:#555"><span style="display:inline-block;transform:scaleY(1.4)">F4</span></div><div class="ab" style="left:751px;top:706px;width:21px;height:65px;background:linear-gradient(180deg,#f0f0f0,#ffffff 60%,#e6e6e6);border-radius:0 0 2px 2px"></div><div class="ab cc" style="left:749.50px;top:754.00px;width:24px;height:10px;font-size:7px;color:#555"><span style="display:inline-block;transform:scaleY(1.4)">G4</span></div><div class="ab" style="left:774px;top:706px;width:21px;height:65px;background:linear-gradient(180deg,#f0f0f0,#ffffff 60%,#e6e6e6);border-radius:0 0 2px 2px"></div><div class="ab cc" style="left:772.50px;top:754.00px;width:24px;height:10px;font-size:7px;color:#555"><span style="display:inline-block;transform:scaleY(1.4)">A4</span></div><div class="ab" style="left:796px;top:706px;width:21px;height:65px;background:linear-gradient(180deg,#f0f0f0,#ffffff 60%,#e6e6e6);border-radius:0 0 2px 2px"></div><div class="ab cc" style="left:794.50px;top:754.00px;width:24px;height:10px;font-size:7px;color:#555"><span style="display:inline-block;transform:scaleY(1.4)">B4</span></div><div class="ab" style="left:819px;top:706px;width:21px;height:65px;background:linear-gradient(180deg,#f0f0f0,#ffffff 60%,#e6e6e6);border-radius:0 0 2px 2px"></div><div class="ab cc" style="left:817.50px;top:754.00px;width:24px;height:10px;font-size:7px;color:#555"><span style="display:inline-block;transform:scaleY(1.4)">C5</span></div><div class="ab" style="left:842px;top:706px;width:21px;height:65px;background:linear-gradient(180deg,#f0f0f0,#ffffff 60%,#e6e6e6);border-radius:0 0 2px 2px"></div><div class="ab cc" style="left:840.50px;top:754.00px;width:24px;height:10px;font-size:7px;color:#555"><span style="display:inline-block;transform:scaleY(1.4)">D5</span></div><div class="ab" style="left:864px;top:706px;width:21px;height:65px;background:linear-gradient(180deg,#f0f0f0,#ffffff 60%,#e6e6e6);border-radius:0 0 2px 2px"></div><div class="ab cc" style="left:862.50px;top:754.00px;width:24px;height:10px;font-size:7px;color:#555"><span style="display:inline-block;transform:scaleY(1.4)">E5</span></div><div class="ab" style="left:887px;top:706px;width:21px;height:65px;background:linear-gradient(180deg,#f0f0f0,#ffffff 60%,#e6e6e6);border-radius:0 0 2px 2px"></div><div class="ab cc" style="left:885.50px;top:754.00px;width:24px;height:10px;font-size:7px;color:#555"><span style="display:inline-block;transform:scaleY(1.4)">F5</span></div><div class="ab" style="left:910px;top:706px;width:21px;height:65px;background:linear-gradient(180deg,#f0f0f0,#ffffff 60%,#e6e6e6);border-radius:0 0 2px 2px"></div><div class="ab cc" style="left:908.50px;top:754.00px;width:24px;height:10px;font-size:7px;color:#555"><span style="display:inline-block;transform:scaleY(1.4)">G5</span></div><div class="ab" style="left:932px;top:706px;width:21px;height:65px;background:linear-gradient(180deg,#f0f0f0,#ffffff 60%,#e6e6e6);border-radius:0 0 2px 2px"></div><div class="ab cc" style="left:930.50px;top:754.00px;width:24px;height:10px;font-size:7px;color:#555"><span style="display:inline-block;transform:scaleY(1.4)">A5</span></div><div class="ab" style="left:955px;top:706px;width:21px;height:65px;background:linear-gradient(180deg,#f0f0f0,#ffffff 60%,#e6e6e6);border-radius:0 0 2px 2px"></div><div class="ab cc" style="left:953.50px;top:754.00px;width:24px;height:10px;font-size:7px;color:#555"><span style="display:inline-block;transform:scaleY(1.4)">B5</span></div><div class="ab" style="left:978px;top:706px;width:21px;height:65px;background:linear-gradient(180deg,#f0f0f0,#ffffff 60%,#e6e6e6);border-radius:0 0 2px 2px"></div><div class="ab cc" style="left:976.50px;top:754.00px;width:24px;height:10px;font-size:7px;color:#555"><span style="display:inline-block;transform:scaleY(1.4)">C6</span></div><div class="ab" style="left:1000px;top:706px;width:21px;height:65px;background:linear-gradient(180deg,#f0f0f0,#ffffff 60%,#e6e6e6);border-radius:0 0 2px 2px"></div><div class="ab cc" style="left:998.50px;top:754.00px;width:24px;height:10px;font-size:7px;color:#555"><span style="display:inline-block;transform:scaleY(1.4)">D6</span></div><div class="ab" style="left:1023px;top:706px;width:21px;height:65px;background:linear-gradient(180deg,#f0f0f0,#ffffff 60%,#e6e6e6);border-radius:0 0 2px 2px"></div><div class="ab cc" style="left:1021.50px;top:754.00px;width:24px;height:10px;font-size:7px;color:#555"><span style="display:inline-block;transform:scaleY(1.4)">E6</span></div><div class="ab" style="left:1046px;top:706px;width:21px;height:65px;background:linear-gradient(180deg,#f0f0f0,#ffffff 60%,#e6e6e6);border-radius:0 0 2px 2px"></div><div class="ab cc" style="left:1044.50px;top:754.00px;width:24px;height:10px;font-size:7px;color:#555"><span style="display:inline-block;transform:scaleY(1.4)">F6</span></div><div class="ab" style="left:1068px;top:706px;width:21px;height:65px;background:linear-gradient(180deg,#f0f0f0,#ffffff 60%,#e6e6e6);border-radius:0 0 2px 2px"></div><div class="ab cc" style="left:1066.50px;top:754.00px;width:24px;height:10px;font-size:7px;color:#555"><span style="display:inline-block;transform:scaleY(1.4)">G6</span></div><div class="ab" style="left:1091px;top:706px;width:21px;height:65px;background:linear-gradient(180deg,#f0f0f0,#ffffff 60%,#e6e6e6);border-radius:0 0 2px 2px"></div><div class="ab cc" style="left:1089.50px;top:754.00px;width:24px;height:10px;font-size:7px;color:#555"><span style="display:inline-block;transform:scaleY(1.4)">A6</span></div><div class="ab" style="left:1114px;top:706px;width:21px;height:65px;background:linear-gradient(180deg,#f0f0f0,#ffffff 60%,#e6e6e6);border-radius:0 0 2px 2px"></div><div class="ab cc" style="left:1112.50px;top:754.00px;width:24px;height:10px;font-size:7px;color:#555"><span style="display:inline-block;transform:scaleY(1.4)">B6</span></div><div class="ab" style="left:357px;top:706px;width:14px;height:44px;background:linear-gradient(180deg,#1e1e1e,#121212 70%,#1a1a1a 90%,#2c2c2c 97%,#111);border-radius:0 0 2px 2px;box-shadow:1px 2px 2px rgba(0,0,0,.35)"></div><div class="ab" style="left:380px;top:706px;width:14px;height:44px;background:linear-gradient(180deg,#1e1e1e,#121212 70%,#1a1a1a 90%,#2c2c2c 97%,#111);border-radius:0 0 2px 2px;box-shadow:1px 2px 2px rgba(0,0,0,.35)"></div><div class="ab" style="left:425px;top:706px;width:14px;height:44px;background:linear-gradient(180deg,#1e1e1e,#121212 70%,#1a1a1a 90%,#2c2c2c 97%,#111);border-radius:0 0 2px 2px;box-shadow:1px 2px 2px rgba(0,0,0,.35)"></div><div class="ab" style="left:448px;top:706px;width:14px;height:44px;background:linear-gradient(180deg,#1e1e1e,#121212 70%,#1a1a1a 90%,#2c2c2c 97%,#111);border-radius:0 0 2px 2px;box-shadow:1px 2px 2px rgba(0,0,0,.35)"></div><div class="ab" style="left:471px;top:706px;width:14px;height:44px;background:linear-gradient(180deg,#1e1e1e,#121212 70%,#1a1a1a 90%,#2c2c2c 97%,#111);border-radius:0 0 2px 2px;box-shadow:1px 2px 2px rgba(0,0,0,.35)"></div><div class="ab" style="left:516px;top:706px;width:14px;height:44px;background:linear-gradient(180deg,#1e1e1e,#121212 70%,#1a1a1a 90%,#2c2c2c 97%,#111);border-radius:0 0 2px 2px;box-shadow:1px 2px 2px rgba(0,0,0,.35)"></div><div class="ab" style="left:539px;top:706px;width:14px;height:44px;background:linear-gradient(180deg,#1e1e1e,#121212 70%,#1a1a1a 90%,#2c2c2c 97%,#111);border-radius:0 0 2px 2px;box-shadow:1px 2px 2px rgba(0,0,0,.35)"></div><div class="ab" style="left:584px;top:706px;width:14px;height:44px;background:linear-gradient(180deg,#1e1e1e,#121212 70%,#1a1a1a 90%,#2c2c2c 97%,#111);border-radius:0 0 2px 2px;box-shadow:1px 2px 2px rgba(0,0,0,.35)"></div><div class="ab" style="left:607px;top:706px;width:14px;height:44px;background:linear-gradient(180deg,#1e1e1e,#121212 70%,#1a1a1a 90%,#2c2c2c 97%,#111);border-radius:0 0 2px 2px;box-shadow:1px 2px 2px rgba(0,0,0,.35)"></div><div class="ab" style="left:629px;top:706px;width:14px;height:44px;background:linear-gradient(180deg,#1e1e1e,#121212 70%,#1a1a1a 90%,#2c2c2c 97%,#111);border-radius:0 0 2px 2px;box-shadow:1px 2px 2px rgba(0,0,0,.35)"></div><div class="ab" style="left:675px;top:706px;width:14px;height:44px;background:linear-gradient(180deg,#1e1e1e,#121212 70%,#1a1a1a 90%,#2c2c2c 97%,#111);border-radius:0 0 2px 2px;box-shadow:1px 2px 2px rgba(0,0,0,.35)"></div><div class="ab" style="left:698px;top:706px;width:14px;height:44px;background:linear-gradient(180deg,#1e1e1e,#121212 70%,#1a1a1a 90%,#2c2c2c 97%,#111);border-radius:0 0 2px 2px;box-shadow:1px 2px 2px rgba(0,0,0,.35)"></div><div class="ab" style="left:743px;top:706px;width:14px;height:44px;background:linear-gradient(180deg,#1e1e1e,#121212 70%,#1a1a1a 90%,#2c2c2c 97%,#111);border-radius:0 0 2px 2px;box-shadow:1px 2px 2px rgba(0,0,0,.35)"></div><div class="ab" style="left:766px;top:706px;width:14px;height:44px;background:linear-gradient(180deg,#1e1e1e,#121212 70%,#1a1a1a 90%,#2c2c2c 97%,#111);border-radius:0 0 2px 2px;box-shadow:1px 2px 2px rgba(0,0,0,.35)"></div><div class="ab" style="left:788px;top:706px;width:14px;height:44px;background:linear-gradient(180deg,#1e1e1e,#121212 70%,#1a1a1a 90%,#2c2c2c 97%,#111);border-radius:0 0 2px 2px;box-shadow:1px 2px 2px rgba(0,0,0,.35)"></div><div class="ab" style="left:834px;top:706px;width:14px;height:44px;background:linear-gradient(180deg,#1e1e1e,#121212 70%,#1a1a1a 90%,#2c2c2c 97%,#111);border-radius:0 0 2px 2px;box-shadow:1px 2px 2px rgba(0,0,0,.35)"></div><div class="ab" style="left:856px;top:706px;width:14px;height:44px;background:linear-gradient(180deg,#1e1e1e,#121212 70%,#1a1a1a 90%,#2c2c2c 97%,#111);border-radius:0 0 2px 2px;box-shadow:1px 2px 2px rgba(0,0,0,.35)"></div><div class="ab" style="left:902px;top:706px;width:14px;height:44px;background:linear-gradient(180deg,#1e1e1e,#121212 70%,#1a1a1a 90%,#2c2c2c 97%,#111);border-radius:0 0 2px 2px;box-shadow:1px 2px 2px rgba(0,0,0,.35)"></div><div class="ab" style="left:924px;top:706px;width:14px;height:44px;background:linear-gradient(180deg,#1e1e1e,#121212 70%,#1a1a1a 90%,#2c2c2c 97%,#111);border-radius:0 0 2px 2px;box-shadow:1px 2px 2px rgba(0,0,0,.35)"></div><div class="ab" style="left:947px;top:706px;width:14px;height:44px;background:linear-gradient(180deg,#1e1e1e,#121212 70%,#1a1a1a 90%,#2c2c2c 97%,#111);border-radius:0 0 2px 2px;box-shadow:1px 2px 2px rgba(0,0,0,.35)"></div><div class="ab" style="left:992px;top:706px;width:14px;height:44px;background:linear-gradient(180deg,#1e1e1e,#121212 70%,#1a1a1a 90%,#2c2c2c 97%,#111);border-radius:0 0 2px 2px;box-shadow:1px 2px 2px rgba(0,0,0,.35)"></div><div class="ab" style="left:1015px;top:706px;width:14px;height:44px;background:linear-gradient(180deg,#1e1e1e,#121212 70%,#1a1a1a 90%,#2c2c2c 97%,#111);border-radius:0 0 2px 2px;box-shadow:1px 2px 2px rgba(0,0,0,.35)"></div><div class="ab" style="left:1060px;top:706px;width:14px;height:44px;background:linear-gradient(180deg,#1e1e1e,#121212 70%,#1a1a1a 90%,#2c2c2c 97%,#111);border-radius:0 0 2px 2px;box-shadow:1px 2px 2px rgba(0,0,0,.35)"></div><div class="ab" style="left:1083px;top:706px;width:14px;height:44px;background:linear-gradient(180deg,#1e1e1e,#121212 70%,#1a1a1a 90%,#2c2c2c 97%,#111);border-radius:0 0 2px 2px;box-shadow:1px 2px 2px rgba(0,0,0,.35)"></div><div class="ab" style="left:1106px;top:706px;width:14px;height:44px;background:linear-gradient(180deg,#1e1e1e,#121212 70%,#1a1a1a 90%,#2c2c2c 97%,#111);border-radius:0 0 2px 2px;box-shadow:1px 2px 2px rgba(0,0,0,.35)"></div><div class="ab" style="left:668px;top:736px;width:6px;height:6px;background:#111;border-radius:50%"></div><svg class="ab" style="left:0px;top:766px;" width="16" height="25" viewBox="0 0 16 25"><circle cx="0" cy="15" r="13" fill="#25292d"/><path d="M-1 10 L4 15 L-1 20" fill="none" stroke="#3be08c" stroke-width="1.6"/></svg>
</body></html>
